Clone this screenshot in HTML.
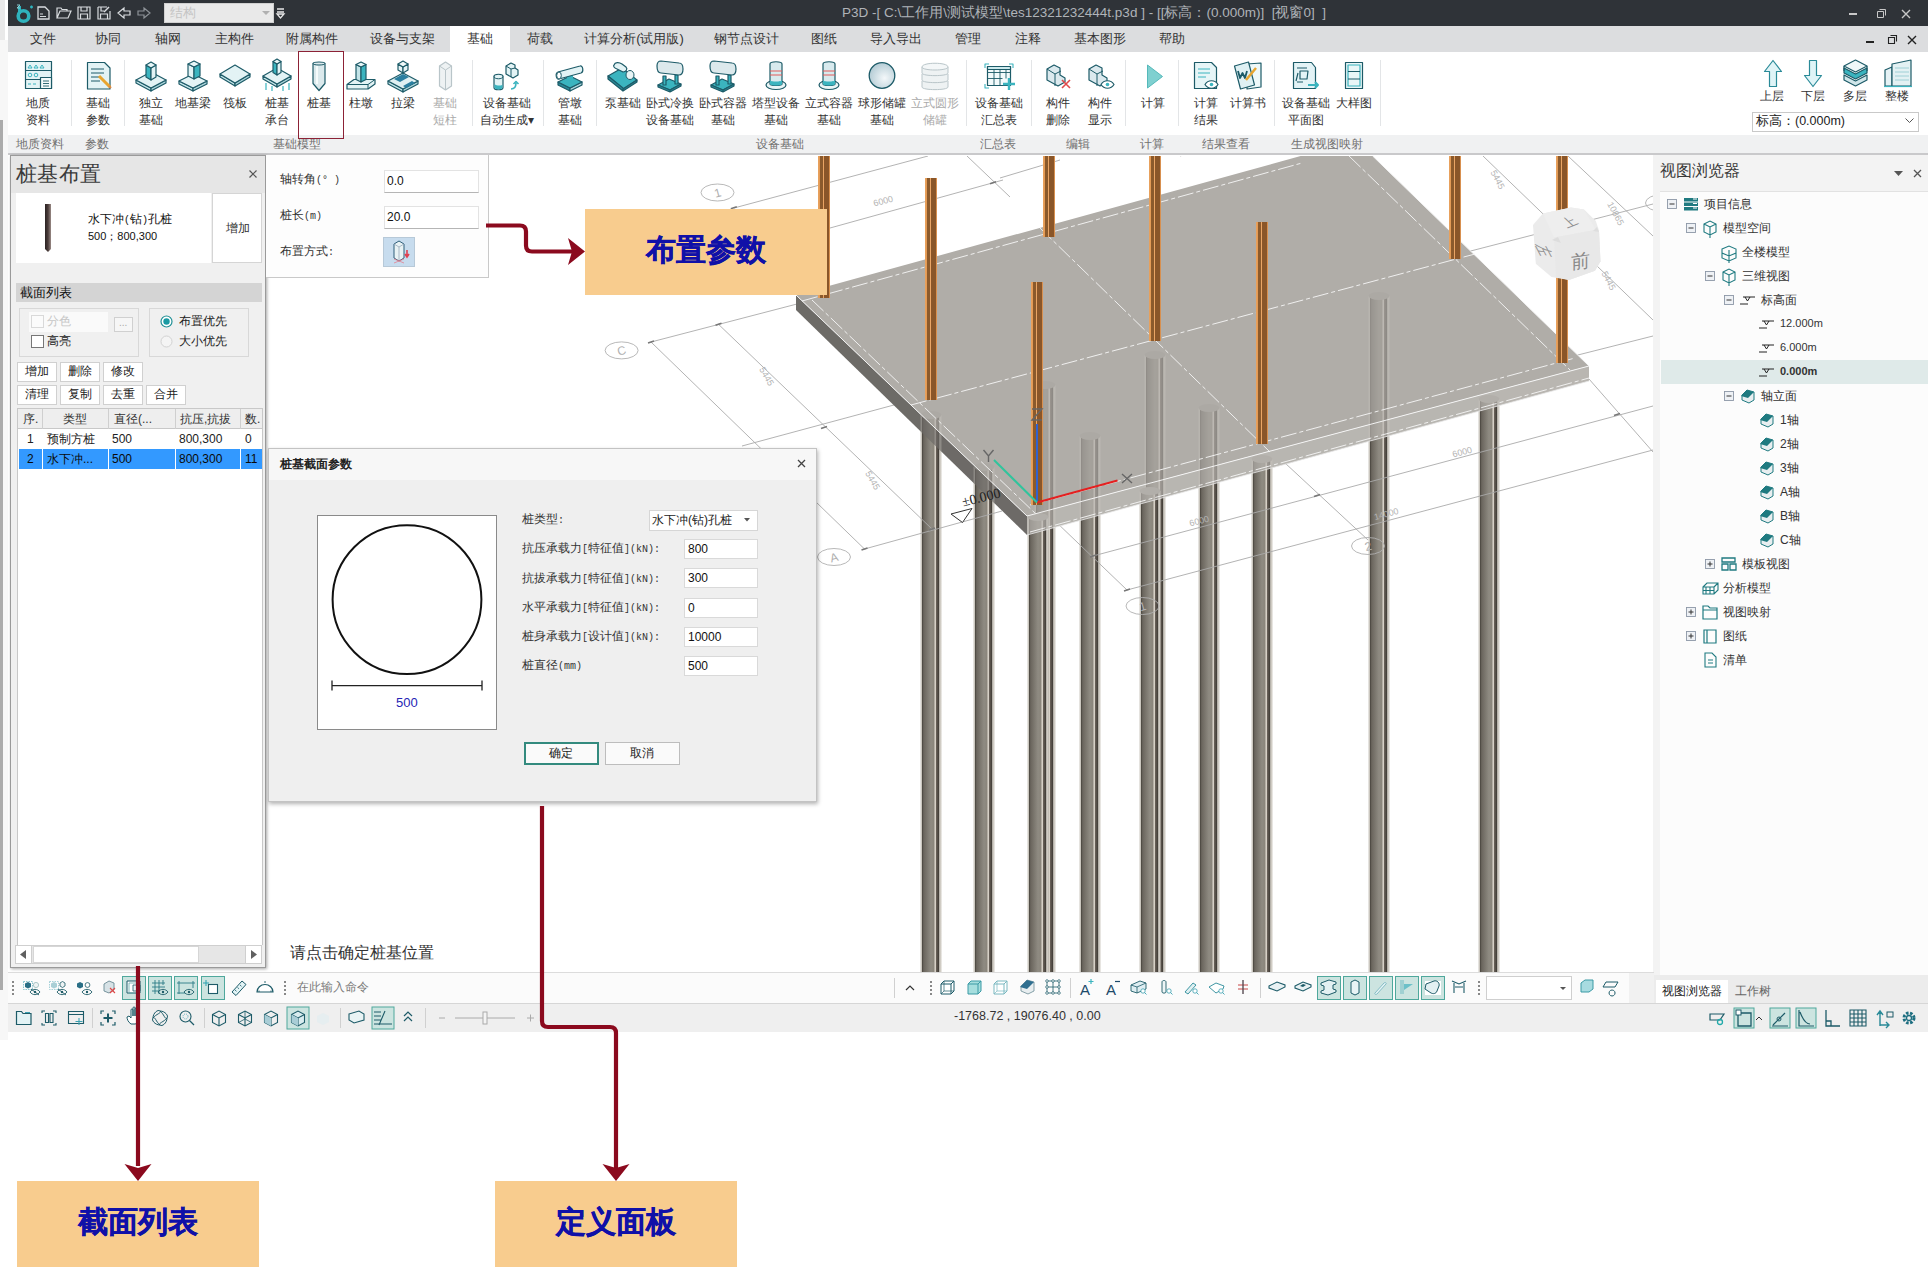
<!DOCTYPE html><html><head><meta charset="utf-8"><style>
*{box-sizing:border-box;margin:0;padding:0}
html,body{width:1928px;height:1267px;overflow:hidden;background:#fff;font-family:"Liberation Sans",sans-serif;color:#222}
body{position:relative}
.a{position:absolute}
.t{position:absolute;white-space:nowrap;line-height:1}
.tab{position:absolute;top:26px;height:25px;line-height:25px;font-size:13px;color:#333;white-space:nowrap;transform:translateX(-50%)}
.rl{position:absolute;font-size:12px;line-height:17px;color:#333;text-align:center;transform:translateX(-50%);white-space:nowrap}
.dis{color:#aaa}
.gl{position:absolute;top:135.5px;font-size:12px;line-height:17px;color:#707070;transform:translateX(-50%);white-space:nowrap}
.sep{position:absolute;top:60px;width:1px;height:66px;background:#e3e5e7}
svg{position:absolute;overflow:visible}
.m{font-family:"Liberation Mono",monospace;font-size:10px}
</style></head><body>
<div class="a" style="left:0px;top:0px;width:8px;height:1267px;background:#fff"></div>
<div class="a" style="left:0px;top:0px;width:5px;height:40px;background:#e9e9e9"></div>
<div class="a" style="left:0px;top:40px;width:8px;height:1000px;background:#f7f7f7"></div>
<div class="a" style="left:0px;top:120px;width:3px;height:870px;background:#ababab"></div>
<div class="a" style="left:8px;top:0px;width:1920px;height:26px;background:#2f3338"></div>
<svg style="left:14px;top:3px" width="20" height="20" viewBox="0 0 20 20" ><circle cx="9.5" cy="13" r="5.3" fill="none" stroke="#2fb3bd" stroke-width="3.6"/><rect x="4" y="3" width="3" height="8" fill="#2fb3bd"/><path d="M16 4h3M17.5 2.5v3" stroke="#2fb3bd" stroke-width="1.4"/><path d="M3 2h3l-3 3h3" stroke="#8ccdd2" stroke-width="1" fill="none"/></svg>
<svg style="left:37px;top:6px" width="13" height="14" viewBox="0 0 13 14" ><path d="M1 1h7l4 4v8H1z" fill="none" stroke="#d9dcdf" stroke-width="1.3"/><path d="M3 8h3M3 10.5h6" stroke="#d9dcdf" stroke-width="1.1"/></svg>
<svg style="left:56px;top:6px" width="16" height="13" viewBox="0 0 16 13" ><path d="M1 2h4l1 1.5h5V5H4L1 12z M1 12l3-7h11l-3 7z" fill="none" stroke="#d9dcdf" stroke-width="1.2"/></svg>
<svg style="left:77px;top:6px" width="14" height="14" viewBox="0 0 14 14" ><path d="M1 1h12v12H1z M4 1v4h6V1 M3.5 13V8h7v5" fill="none" stroke="#d9dcdf" stroke-width="1.2"/></svg>
<svg style="left:97px;top:6px" width="14" height="14" viewBox="0 0 14 14" ><path d="M1 1h9M13 5v8H1V1 M3.5 13V8h7v5 M4 1v4h3" fill="none" stroke="#d9dcdf" stroke-width="1.2"/><path d="M7 6l5-5" stroke="#d9dcdf" stroke-width="1.5"/></svg>
<svg style="left:117px;top:7px" width="14" height="12" viewBox="0 0 14 12" ><path d="M1 6l6-5v3h6v4H7v3z" fill="none" stroke="#d9dcdf" stroke-width="1.2"/></svg>
<svg style="left:137px;top:7px" width="14" height="12" viewBox="0 0 14 12" ><path d="M13 6L7 1v3H1v4h6v3z" fill="none" stroke="#8d9297" stroke-width="1.2"/></svg>
<div class="a" style="left:164px;top:3px;width:110px;height:20px;background:#e9e9e9;border:1px solid #d0d0d0"></div>
<div class="t" style="left:170px;top:6px;font-size:13px;color:#c4c4c4">结构</div>
<svg style="left:262px;top:11px" width="8" height="5" viewBox="0 0 8 5" ><path d="M0 0h8L4 4z" fill="#b0b0b0"/></svg>
<svg style="left:276px;top:8px" width="9" height="11" viewBox="0 0 9 11" ><path d="M1 1h7M1 4h7M1 6h7L4.5 10z" fill="none" stroke="#e8e8e8" stroke-width="1.3"/></svg>
<div class="t" style="left:842px;top:6px;font-size:13.5px;color:#b0b4b8">P3D -[ C:\工作用\测试模型\tes12321232444t.p3d ] - [[标高：(0.000m)]&nbsp; [视窗0]&nbsp; ]</div>
<svg style="left:1849px;top:13px" width="9" height="3" viewBox="0 0 9 3" ><rect x="0" y="0" width="8" height="2" fill="#c8c8c8"/></svg>
<svg style="left:1877px;top:9px" width="9" height="9" viewBox="0 0 9 9" ><path d="M2.5 0.5h6v6M0.5 2.5h6v6h-6z" fill="none" stroke="#c8c8c8" stroke-width="1"/></svg>
<svg style="left:1901px;top:9px" width="10" height="10" viewBox="0 0 10 10" ><path d="M1 1l8 8M9 1l-8 8" stroke="#c8c8c8" stroke-width="1.4"/></svg>
<div class="a" style="left:8px;top:26px;width:1920px;height:26px;background:#dcdddf"></div>
<div class="a" style="left:450px;top:26px;width:60px;height:26px;background:#fff"></div>
<div class="tab" style="left:43px">文件</div>
<div class="tab" style="left:108px">协同</div>
<div class="tab" style="left:168px">轴网</div>
<div class="tab" style="left:234px">主构件</div>
<div class="tab" style="left:312px">附属构件</div>
<div class="tab" style="left:402px">设备与支架</div>
<div class="tab" style="left:480px">基础</div>
<div class="tab" style="left:540px">荷载</div>
<div class="tab" style="left:634px">计算分析(试用版)</div>
<div class="tab" style="left:746px">钢节点设计</div>
<div class="tab" style="left:824px">图纸</div>
<div class="tab" style="left:896px">导入导出</div>
<div class="tab" style="left:968px">管理</div>
<div class="tab" style="left:1028px">注释</div>
<div class="tab" style="left:1100px">基本图形</div>
<div class="tab" style="left:1172px">帮助</div>
<svg style="left:1866px;top:41px" width="9" height="3" viewBox="0 0 9 3" ><rect x="0" y="0" width="8" height="2" fill="#222"/></svg>
<svg style="left:1888px;top:35px" width="9" height="9" viewBox="0 0 9 9" ><path d="M2.5 0.5h6v6M0.5 2.5h6v6h-6z" fill="none" stroke="#222" stroke-width="1.1"/></svg>
<svg style="left:1907px;top:35px" width="10" height="10" viewBox="0 0 10 10" ><path d="M1 1l8 8M9 1l-8 8" stroke="#222" stroke-width="1.4"/></svg>
<div class="a" style="left:8px;top:52px;width:1920px;height:83px;background:#fff"></div>
<div class="a" style="left:8px;top:135px;width:1920px;height:18px;background:#f0f1f2"></div>
<div class="a" style="left:8px;top:153px;width:1920px;height:2px;background:#c9c9cb"></div>
<div class="rl" style="left:38px;top:95px">地质</div>
<div class="rl" style="left:38px;top:112px">资料</div>
<div class="rl" style="left:98px;top:95px">基础</div>
<div class="rl" style="left:98px;top:112px">参数</div>
<div class="rl" style="left:151px;top:95px">独立</div>
<div class="rl" style="left:151px;top:112px">基础</div>
<div class="rl" style="left:193px;top:95px">地基梁</div>
<div class="rl" style="left:235px;top:95px">筏板</div>
<div class="rl" style="left:277px;top:95px">桩基</div>
<div class="rl" style="left:277px;top:112px">承台</div>
<div class="rl" style="left:319px;top:95px">桩基</div>
<div class="rl" style="left:361px;top:95px">柱墩</div>
<div class="rl" style="left:403px;top:95px">拉梁</div>
<div class="rl dis" style="left:445px;top:95px">基础</div>
<div class="rl dis" style="left:445px;top:112px">短柱</div>
<div class="rl" style="left:507px;top:95px">设备基础</div>
<div class="rl" style="left:507px;top:112px">自动生成▾</div>
<div class="rl" style="left:570px;top:95px">管墩</div>
<div class="rl" style="left:570px;top:112px">基础</div>
<div class="rl" style="left:623px;top:95px">泵基础</div>
<div class="rl" style="left:670px;top:95px">卧式冷换</div>
<div class="rl" style="left:670px;top:112px">设备基础</div>
<div class="rl" style="left:723px;top:95px">卧式容器</div>
<div class="rl" style="left:723px;top:112px">基础</div>
<div class="rl" style="left:776px;top:95px">塔型设备</div>
<div class="rl" style="left:776px;top:112px">基础</div>
<div class="rl" style="left:829px;top:95px">立式容器</div>
<div class="rl" style="left:829px;top:112px">基础</div>
<div class="rl" style="left:882px;top:95px">球形储罐</div>
<div class="rl" style="left:882px;top:112px">基础</div>
<div class="rl dis" style="left:935px;top:95px">立式圆形</div>
<div class="rl dis" style="left:935px;top:112px">储罐</div>
<div class="rl" style="left:999px;top:95px">设备基础</div>
<div class="rl" style="left:999px;top:112px">汇总表</div>
<div class="rl" style="left:1058px;top:95px">构件</div>
<div class="rl" style="left:1058px;top:112px">删除</div>
<div class="rl" style="left:1100px;top:95px">构件</div>
<div class="rl" style="left:1100px;top:112px">显示</div>
<div class="rl" style="left:1153px;top:95px">计算</div>
<div class="rl" style="left:1206px;top:95px">计算</div>
<div class="rl" style="left:1206px;top:112px">结果</div>
<div class="rl" style="left:1248px;top:95px">计算书</div>
<div class="rl" style="left:1306px;top:95px">设备基础</div>
<div class="rl" style="left:1306px;top:112px">平面图</div>
<div class="rl" style="left:1354px;top:95px">大样图</div>
<div class="sep" style="left:71px"></div>
<div class="sep" style="left:124px"></div>
<div class="sep" style="left:472px"></div>
<div class="sep" style="left:543px"></div>
<div class="sep" style="left:596px"></div>
<div class="sep" style="left:966px"></div>
<div class="sep" style="left:1031px"></div>
<div class="sep" style="left:1125px"></div>
<div class="sep" style="left:1178px"></div>
<div class="sep" style="left:1274px"></div>
<div class="sep" style="left:1380px"></div>
<div class="gl" style="left:40px">地质资料</div>
<div class="gl" style="left:97px">参数</div>
<div class="gl" style="left:297px">基础模型</div>
<div class="gl" style="left:780px">设备基础</div>
<div class="gl" style="left:998px">汇总表</div>
<div class="gl" style="left:1078px">编辑</div>
<div class="gl" style="left:1152px">计算</div>
<div class="gl" style="left:1226px">结果查看</div>
<div class="gl" style="left:1327px">生成视图映射</div>
<div class="a" style="left:298px;top:51px;width:46px;height:88px;border:1px solid #8c2236"></div>
<div class="rl" style="left:1772px;top:88px">上层</div>
<div class="rl" style="left:1813px;top:88px">下层</div>
<div class="rl" style="left:1855px;top:88px">多层</div>
<div class="rl" style="left:1897px;top:88px">整楼</div>
<div class="a" style="left:1752px;top:112px;width:167px;height:20px;background:#fff;border:1px solid #c9c9c9"></div>
<div class="t" style="left:1756px;top:115px;font-size:12.5px;color:#222">标高：(0.000m)</div>
<svg style="left:1905px;top:118px" width="9" height="6" viewBox="0 0 9 6" ><path d="M0.5 0.5l4 4 4-4" fill="none" stroke="#555" stroke-width="1"/></svg>
<svg style="left:0;top:0" width="1928" height="160" viewBox="0 0 1928 160"><path d="M25.5 61.5h26v27h-26z" fill="#e3f3f5" stroke="#1d5b68" stroke-width="1.2" stroke-linejoin="round" /><path d="M25.5 70.5h26M25.5 79.5h15" fill="#1d5b68" stroke="#1d5b68" stroke-width="1.2" stroke-linejoin="round" /><path d="M28 68l2-3 2 3zM34 68l2-3 2 3zM40 68l2-3 2 3z" fill="none" stroke="#3bb4bf" stroke-width="1" stroke-linejoin="round" /><circle cx="30" cy="75" r="1.8" fill="none" stroke="#3bb4bf" stroke-width="1"/><circle cx="36" cy="75" r="1.8" fill="none" stroke="#3bb4bf" stroke-width="1"/><path d="M28 84h3M33 84h3" fill="none" stroke="#3bb4bf" stroke-width="1" stroke-linejoin="round" /><path d="M40.5 77.5h11v11h-11z" fill="#f4fbfb" stroke="#1d5b68" stroke-width="1.2" stroke-linejoin="round" /><path d="M43 81h6M43 83.5h6M43 86h6" fill="none" stroke="#1d5b68" stroke-width="0.9" stroke-linejoin="round" /><path d="M87.5 62.5h17l5.5 5.5v21h-22.5z" fill="#e3f3f5" stroke="#1d5b68" stroke-width="1.2" stroke-linejoin="round" /><path d="M91 69h13M91 73h13M91 77h10M91 81h9" fill="none" stroke="#1d5b68" stroke-width="1" stroke-linejoin="round" /><path d="M99 76l11 11" fill="none" stroke="#e8a530" stroke-width="3" stroke-linejoin="round" /><path d="M109 86l2 2" fill="none" stroke="#d84" stroke-width="2" stroke-linejoin="round" /><path d="M136 80L151 88L151 91L136 83Z" fill="#c3e4e8" stroke="#1d5b68" stroke-width="1.2" stroke-linejoin="round" /><path d="M151 88L166 80L166 83L151 91Z" fill="#a9d3d9" stroke="#1d5b68" stroke-width="1.2" stroke-linejoin="round" /><path d="M136 80L151 72L166 80L151 88Z" fill="#e3f3f5" stroke="#1d5b68" stroke-width="1.2" stroke-linejoin="round" /><path d="M146 65L151 68L151 80L146 77Z" fill="#3bb4bf" stroke="#1d5b68" stroke-width="1.2" stroke-linejoin="round" /><path d="M151 68L156 65L156 77L151 80Z" fill="#e3f3f5" stroke="#1d5b68" stroke-width="1.2" stroke-linejoin="round" /><path d="M146 65L151 62L156 65L151 68Z" fill="#e9f7f8" stroke="#1d5b68" stroke-width="1.2" stroke-linejoin="round" /><path d="M179 81L193 88L193 91L179 84Z" fill="#c3e4e8" stroke="#1d5b68" stroke-width="1.2" stroke-linejoin="round" /><path d="M193 88L207 81L207 84L193 91Z" fill="#a9d3d9" stroke="#1d5b68" stroke-width="1.2" stroke-linejoin="round" /><path d="M179 81L193 74L207 81L193 88Z" fill="#e3f3f5" stroke="#1d5b68" stroke-width="1.2" stroke-linejoin="round" /><path d="M188 64L194 67L194 79L188 76Z" fill="#e3f3f5" stroke="#1d5b68" stroke-width="1.2" stroke-linejoin="round" /><path d="M194 67L200 64L200 76L194 79Z" fill="#3bb4bf" stroke="#1d5b68" stroke-width="1.2" stroke-linejoin="round" /><path d="M188 64L194 61L200 64L194 67Z" fill="#e9f7f8" stroke="#1d5b68" stroke-width="1.2" stroke-linejoin="round" /><path d="M220 74L235 83L235 86L220 77Z" fill="#c3e4e8" stroke="#1d5b68" stroke-width="1.2" stroke-linejoin="round" /><path d="M235 83L250 74L250 77L235 86Z" fill="#a9d3d9" stroke="#1d5b68" stroke-width="1.2" stroke-linejoin="round" /><path d="M220 74L235 65L250 74L235 83Z" fill="#e3f3f5" stroke="#1d5b68" stroke-width="1.2" stroke-linejoin="round" /><path d="M266 83v7M272 86v5M283 86v5M289 83v7" fill="none" stroke="#3bb4bf" stroke-width="1.2" stroke-linejoin="round" /><path d="M263 76L277 84L277 87L263 79Z" fill="#c3e4e8" stroke="#1d5b68" stroke-width="1.2" stroke-linejoin="round" /><path d="M277 84L291 76L291 79L277 87Z" fill="#a9d3d9" stroke="#1d5b68" stroke-width="1.2" stroke-linejoin="round" /><path d="M263 76L277 68L291 76L277 84Z" fill="#e3f3f5" stroke="#1d5b68" stroke-width="1.2" stroke-linejoin="round" /><path d="M273 61.5L277 64L277 75L273 72.5Z" fill="#3bb4bf" stroke="#1d5b68" stroke-width="1.2" stroke-linejoin="round" /><path d="M277 64L281 61.5L281 72.5L277 75Z" fill="#e3f3f5" stroke="#1d5b68" stroke-width="1.2" stroke-linejoin="round" /><path d="M273 61.5L277 59.0L281 61.5L277 64Z" fill="#e9f7f8" stroke="#1d5b68" stroke-width="1.2" stroke-linejoin="round" /><path d="M313 63.5c0-2 12-2 12 0v20l-6 7l-6-7z" fill="#dbe9ec" stroke="#1d5b68" stroke-width="1.2" stroke-linejoin="round" /><path d="M313 63.5c0 2 12 2 12 0" fill="none" stroke="#1d5b68" stroke-width="1" stroke-linejoin="round" /><path d="M317 66v18" fill="none" stroke="#f5fbfb" stroke-width="2" stroke-linejoin="round" /><path d="M347 84.5l7-5h21v4.5l-7 5h-21z" fill="#e3f3f5" stroke="#1d5b68" stroke-width="1.2" stroke-linejoin="round" /><path d="M347 84.5h21l7-5M368 84.5v4.5" fill="none" stroke="#1d5b68" stroke-width="1" stroke-linejoin="round" /><path d="M356 64.5L361 67L361 82L356 79.5Z" fill="#c3e4e8" stroke="#1d5b68" stroke-width="1.2" stroke-linejoin="round" /><path d="M361 67L366 64.5L366 79.5L361 82Z" fill="#3bb4bf" stroke="#1d5b68" stroke-width="1.2" stroke-linejoin="round" /><path d="M356 64.5L361 62.0L366 64.5L361 67Z" fill="#e9f7f8" stroke="#1d5b68" stroke-width="1.2" stroke-linejoin="round" /><path d="M388 81L403 89L403 92L388 84Z" fill="#c3e4e8" stroke="#1d5b68" stroke-width="1.2" stroke-linejoin="round" /><path d="M403 89L418 81L418 84L403 92Z" fill="#a9d3d9" stroke="#1d5b68" stroke-width="1.2" stroke-linejoin="round" /><path d="M388 81L403 73L418 81L403 89Z" fill="#dff0f2" stroke="#1d5b68" stroke-width="1.2" stroke-linejoin="round" /><path d="M394 79l9-5 6 3-9 5zM403 86l9-5 3 2-9 5z" fill="#2a7fa0" stroke="none" stroke-width="1.2" stroke-linejoin="round" /><path d="M398 64L403 67L403 73L398 70Z" fill="#e3f3f5" stroke="#1d5b68" stroke-width="1.2" stroke-linejoin="round" /><path d="M403 67L408 64L408 70L403 73Z" fill="#e3f3f5" stroke="#1d5b68" stroke-width="1.2" stroke-linejoin="round" /><path d="M398 64L403 61L408 64L403 67Z" fill="#f2fafa" stroke="#1d5b68" stroke-width="1.2" stroke-linejoin="round" /><path d="M439.5 66l6-4 6 4v20l-6 4-6-4z" fill="#eef2f3" stroke="#b9c5c9" stroke-width="1.2" stroke-linejoin="round" /><path d="M445.5 70v20M439.5 66l6 4 6-4" fill="none" stroke="#b9c5c9" stroke-width="1" stroke-linejoin="round" /><path d="M494 76.5c0-3 9-3 9 0v11c0 3-9 3-9 0z" fill="#e3f3f5" stroke="#1d5b68" stroke-width="1.2" stroke-linejoin="round" /><path d="M494 76.5c0 3 9 3 9 0" fill="none" stroke="#1d5b68" stroke-width="1" stroke-linejoin="round" /><path d="M494.5 84c2 2 8 2 8 0v3.5c0 2.5-8 2.5-8 0z" fill="#3bb4bf" stroke="none" stroke-width="1.2" stroke-linejoin="round" /><path d="M506 66l5-3 4 2v3l3 2v5l-5 3-7-4z" fill="#e3f3f5" stroke="#1d5b68" stroke-width="1.2" stroke-linejoin="round" /><path d="M506 66l5 3v8M511 69l4-1" fill="none" stroke="#1d5b68" stroke-width="1" stroke-linejoin="round" /><path d="M511 89c3 0 5-2 5-6M513.5 84l2.5-2.5 2.5 2.5" fill="none" stroke="#3bb4bf" stroke-width="1.6" stroke-linejoin="round" /><path d="M558 82L570 88L570 91L558 85Z" fill="#2a8a98" stroke="#1d5b68" stroke-width="1.2" stroke-linejoin="round" /><path d="M570 88L582 82L582 85L570 91Z" fill="#a9d3d9" stroke="#1d5b68" stroke-width="1.2" stroke-linejoin="round" /><path d="M558 82L570 76L582 82L570 88Z" fill="#3bb4bf" stroke="#1d5b68" stroke-width="1.2" stroke-linejoin="round" /><path d="M567 73v8h6v-8z" fill="#3bb4bf" stroke="none" stroke-width="1.2" stroke-linejoin="round" /><path d="M558 72l22-6c3-1 4 6 1 7l-22 6c-3 1-4-6-1-7z" fill="#e3f3f5" stroke="#1d5b68" stroke-width="1.2" stroke-linejoin="round" /><ellipse cx="559" cy="75.5" rx="2.3" ry="3.5" fill="#fff" stroke="#1d5b68" stroke-width="1"/><path d="M608 76l15 13 14-9-15-12z" fill="#3bb4bf" stroke="#1d5b68" stroke-width="1.2" stroke-linejoin="round" /><path d="M608 76v3l15 12v-3zM623 91l14-9v-2l-14 9z" fill="#2a8a98" stroke="#1d5b68" stroke-width="1.2" stroke-linejoin="round" /><path d="M614 65c1-3 5-3 8-1l4 3c2 2 0 5-3 5l-6-3c-3-1-4-3-3-4z" fill="#e3f3f5" stroke="#1d5b68" stroke-width="1.2" stroke-linejoin="round" /><ellipse cx="630" cy="75" rx="4" ry="4.5" fill="#e8f4f5" stroke="#1d5b68" stroke-width="1"/><path d="M658 85l12 5 11-6-12-5z" fill="#3bb4bf" stroke="#1d5b68" stroke-width="1.2" stroke-linejoin="round" /><path d="M658 85v2l12 5v-2zM670 92l11-6v-2l-11 6z" fill="#2a8a98" stroke="#1d5b68" stroke-width="1.2" stroke-linejoin="round" /><path d="M663 76v9h3v-9zM675 75v9h3v-9z" fill="#3bb4bf" stroke="#1d5b68" stroke-width="1.2" stroke-linejoin="round" /><path d="M657 66c0-4 2-5 4-5l18 2c3 0 4 3 4 6s-1 6-4 6l-18-2c-3 0-4-3-4-7z" fill="#dce9ec" stroke="#1d5b68" stroke-width="1.2" stroke-linejoin="round" /><path d="M711 85l12 5 11-6-12-5z" fill="#3bb4bf" stroke="#1d5b68" stroke-width="1.2" stroke-linejoin="round" /><path d="M711 85v2l12 5v-2zM723 92l11-6v-2l-11 6z" fill="#2a8a98" stroke="#1d5b68" stroke-width="1.2" stroke-linejoin="round" /><path d="M716 76v9h3v-9zM728 75v9h3v-9z" fill="#3bb4bf" stroke="#1d5b68" stroke-width="1.2" stroke-linejoin="round" /><path d="M710 66c0-4 2-5 4-5l18 2c3 0 4 3 4 6s-1 6-4 6l-18-2c-3 0-4-3-4-7z" fill="#dce9ec" stroke="#1d5b68" stroke-width="1.2" stroke-linejoin="round" /><ellipse cx="776" cy="85" rx="10" ry="4.5" fill="#e9f5f6" stroke="#1d5b68" stroke-width="1.2"/><path d="M770 64c0-3 12-3 12 0v20c0 2-12 2-12 0z" fill="#d8eaee" stroke="#1d5b68" stroke-width="1.2" stroke-linejoin="round" /><path d="M770 80c0 2 12 2 12 0v4c0 2-12 2-12 0z" fill="#3bb4bf" stroke="none" stroke-width="1.2" stroke-linejoin="round" /><path d="M770 71h12M770 75h12" fill="none" stroke="#e25b5b" stroke-width="1.2" stroke-linejoin="round" /><ellipse cx="829" cy="85" rx="10" ry="4.5" fill="#e9f5f6" stroke="#1d5b68" stroke-width="1.2"/><path d="M823 64c0-3 12-3 12 0v20c0 2-12 2-12 0z" fill="#d8eaee" stroke="#1d5b68" stroke-width="1.2" stroke-linejoin="round" /><path d="M823 80c0 2 12 2 12 0v4c0 2-12 2-12 0z" fill="#3bb4bf" stroke="none" stroke-width="1.2" stroke-linejoin="round" /><path d="M823 71h12M823 75h12" fill="none" stroke="#e25b5b" stroke-width="1.2" stroke-linejoin="round" /><defs><radialGradient id="sph" cx="0.6" cy="0.6" r="0.6"><stop offset="0" stop-color="#f4f8fa"/><stop offset="1" stop-color="#b6cdd6"/></radialGradient></defs><circle cx="882" cy="75.5" r="12.8" fill="url(#sph)" stroke="#1d5b68" stroke-width="1.3"/><path d="M922 81v6c0 3.5 26 3.5 26 0v-6" fill="#eef2f3" stroke="#b9c5c9" stroke-width="1" stroke-linejoin="round" /><path d="M922 74v6c0 3.5 26 3.5 26 0v-6" fill="#eef2f3" stroke="#b9c5c9" stroke-width="1" stroke-linejoin="round" /><path d="M922 67v6c0 3.5 26 3.5 26 0v-6" fill="#eef2f3" stroke="#b9c5c9" stroke-width="1" stroke-linejoin="round" /><path d="M922 67c0-5 26-5 26 0c0 4-26 4-26 0z" fill="#f4f7f8" stroke="#b9c5c9" stroke-width="1" stroke-linejoin="round" /><path d="M987.5 66.5h23v19h-23z" fill="#f3fafb" stroke="#1d5b68" stroke-width="1.2" stroke-linejoin="round" /><path d="M987.5 66.5h23v3h-23z" fill="#cdeaed" stroke="#1d5b68" stroke-width="1.2" stroke-linejoin="round" /><path d="M987.5 72.5h23M987.5 78.5h15M994 69.5v16M1000 69.5v16M1006 69.5v9" fill="none" stroke="#1d5b68" stroke-width="0.9" stroke-linejoin="round" /><path d="M985 68v-4h4M1009 64h4v4M985 84v4h4" fill="none" stroke="#3bb4bf" stroke-width="1.1" stroke-linejoin="round" /><path d="M1003 84h12M1009 78v12" fill="none" stroke="#3bb4bf" stroke-width="2.4" stroke-linejoin="round" /><path d="M1047 69l7-4 6 3v7l5 3v4l-7 4-11-6z" fill="#dbe9ee" stroke="#1d5b68" stroke-width="1.2" stroke-linejoin="round" /><path d="M1047 69l8 5v12M1055 74l6-3" fill="none" stroke="#1d5b68" stroke-width="1" stroke-linejoin="round" /><path d="M1062 80l8 8M1070 80l-8 8" fill="none" stroke="#e04a4a" stroke-width="1.6" stroke-linejoin="round" /><path d="M1089 69l7-4 6 3v7l5 3v4l-7 4-11-6z" fill="#dbe9ee" stroke="#1d5b68" stroke-width="1.2" stroke-linejoin="round" /><path d="M1089 69l8 5v12M1097 74l6-3" fill="none" stroke="#1d5b68" stroke-width="1" stroke-linejoin="round" /><path d="M1101 84.5c3-5 10-5 13 0c-3 5-10 5-13 0z" fill="#fff" stroke="#1d5b68" stroke-width="1.2" stroke-linejoin="round" /><circle cx="1107.5" cy="84.5" r="1.8" fill="#3bb4bf"/><path d="M1147.5 65l15 11.5-15 11.5z" fill="#7fd0d0" stroke="#55b9ba" stroke-width="1" stroke-linejoin="round" /><path d="M1194.5 62.5h17l5 5v21h-22z" fill="#e6f5f7" stroke="#1d5b68" stroke-width="1.2" stroke-linejoin="round" /><path d="M1198 69h12M1198 73h12M1198 77h8" fill="none" stroke="#3bb4bf" stroke-width="1" stroke-linejoin="round" /><path d="M1205 84.5c3-5 10-5 13 0c-3 5-10 5-13 0z" fill="#fff" stroke="#1d5b68" stroke-width="1.2" stroke-linejoin="round" /><circle cx="1211.5" cy="84.5" r="1.8" fill="#3bb4bf"/><path d="M1247 64l14-1v24l-14 2z" fill="#eef8f9" stroke="#1d5b68" stroke-width="1.2" stroke-linejoin="round" /><path d="M1234.5 66l14-4 6 23-14 4z" fill="#dff0f3" stroke="#1d5b68" stroke-width="1.2" stroke-linejoin="round" /><path d="M1238 71l2 7 2.5-5 2.5 5 2-7" fill="none" stroke="#1d5b68" stroke-width="1.8" stroke-linejoin="round" /><path d="M1246 80l10-12" fill="none" stroke="#e8a530" stroke-width="2.5" stroke-linejoin="round" /><path d="M1293.5 62.5h18l4 5v21h-22z" fill="#e3f3f6" stroke="#1d5b68" stroke-width="1.2" stroke-linejoin="round" /><path d="M1297 68h10M1298 73l-2 8M1300 71h8l-1 8h-7z" fill="none" stroke="#1d5b68" stroke-width="1.2" stroke-linejoin="round" /><path d="M1297 82h6" fill="none" stroke="#1d5b68" stroke-width="1" stroke-linejoin="round" /><path d="M1308 85h10M1315 82l3 3-3 3" fill="none" stroke="#3bb4bf" stroke-width="2" stroke-linejoin="round" /><path d="M1345.5 62.5h17v26h-17z" fill="#e9f6f7" stroke="#1d5b68" stroke-width="1.2" stroke-linejoin="round" /><path d="M1348 65h12v21h-12z" fill="none" stroke="#3bb4bf" stroke-width="1.2" stroke-linejoin="round" /><path d="M1348 71.5h12M1348 79h12" fill="none" stroke="#1d5b68" stroke-width="1" stroke-linejoin="round" /><path d="M1773 60.5l-8.5 11h5v15h7v-15h5z" fill="#dff4f7" stroke="#2a8a98" stroke-width="1.2" stroke-linejoin="round" /><path d="M1813 86.5l-8.5-11h5v-15h7v15h5z" fill="#dff4f7" stroke="#2a8a98" stroke-width="1.2" stroke-linejoin="round" /><path d="M1844 80l11.5 6 11.5-6v-5l-11.5 6-11.5-6z" fill="#d0e6ea" stroke="#1d5b68" stroke-width="1.2" stroke-linejoin="round" /><path d="M1844 73l11.5 6 11.5-6v-5l-11.5 6-11.5-6z" fill="#3bb4bf" stroke="#1d5b68" stroke-width="1.2" stroke-linejoin="round" /><path d="M1844 66l11.5-6 11.5 6-11.5 6z" fill="#f0f8f9" stroke="#1d5b68" stroke-width="1.2" stroke-linejoin="round" /><path d="M1844 66v5M1867 66v5" fill="none" stroke="#1d5b68" stroke-width="1.2" stroke-linejoin="round" /><path d="M1885 70l7-3v19h-7z" fill="#e5f2f5" stroke="#1d5b68" stroke-width="1.2" stroke-linejoin="round" /><path d="M1892 64l19-4v26h-19z" fill="#e3f1f3" stroke="#1d5b68" stroke-width="1.2" stroke-linejoin="round" /><path d="M1895 68h14M1895 72h14M1895 76h14M1895 80h14" fill="none" stroke="#9fd0d6" stroke-width="1" stroke-linejoin="round" /><path d="M1884 86.5h28" fill="none" stroke="#3bb4bf" stroke-width="1.2" stroke-linejoin="round" /></svg>
<svg style="left:0;top:0" width="1928" height="1000" viewBox="0 0 1928 1000"><defs><linearGradient id="pile" x1="0" x2="1"><stop offset="0" stop-color="#cbc7bf"/><stop offset="0.06" stop-color="#cbc7bf"/><stop offset="0.08" stop-color="#4a463f"/><stop offset="0.15" stop-color="#6a655d"/><stop offset="0.5" stop-color="#8f8b82"/><stop offset="0.65" stop-color="#8a857b"/><stop offset="0.68" stop-color="#d6d0c6"/><stop offset="0.72" stop-color="#d6d0c6"/><stop offset="0.75" stop-color="#6a625a"/><stop offset="0.88" stop-color="#3f3b35"/><stop offset="0.91" stop-color="#d0ccc4"/><stop offset="1" stop-color="#d0ccc4"/></linearGradient><linearGradient id="colg" x1="0" x2="1"><stop offset="0" stop-color="#e9a35f"/><stop offset="0.14" stop-color="#e39a55"/><stop offset="0.17" stop-color="#8b5a2c"/><stop offset="0.38" stop-color="#8b5a2c"/><stop offset="0.4" stop-color="#eaa565"/><stop offset="0.47" stop-color="#eaa565"/><stop offset="0.5" stop-color="#8a5629"/><stop offset="0.9" stop-color="#8a5629"/><stop offset="0.93" stop-color="#d8904f"/><stop offset="1" stop-color="#d8904f"/></linearGradient><clipPath id="vpc"><rect x="266" y="156" width="1387" height="816"/></clipPath></defs><g clip-path="url(#vpc)"><rect x="1368.5" y="296" width="21" height="676" fill="url(#pile)"/><ellipse cx="1379" cy="296" rx="10.5" ry="4" fill="#a6a29c"/><rect x="1144.5" y="355" width="21" height="617" fill="url(#pile)"/><ellipse cx="1155" cy="355" rx="10.5" ry="4" fill="#a6a29c"/><rect x="1034.5" y="385" width="21" height="587" fill="url(#pile)"/><ellipse cx="1045" cy="385" rx="10.5" ry="4" fill="#a6a29c"/><rect x="1478.5" y="399" width="21" height="573" fill="url(#pile)"/><ellipse cx="1489" cy="399" rx="10.5" ry="4" fill="#a6a29c"/><rect x="1198.5" y="408" width="21" height="564" fill="url(#pile)"/><ellipse cx="1209" cy="408" rx="10.5" ry="4" fill="#a6a29c"/><rect x="920.5" y="415" width="21" height="557" fill="url(#pile)"/><ellipse cx="931" cy="415" rx="10.5" ry="4" fill="#a6a29c"/><rect x="1079.5" y="436" width="21" height="536" fill="url(#pile)"/><ellipse cx="1090" cy="436" rx="10.5" ry="4" fill="#a6a29c"/><rect x="1251.5" y="459" width="21" height="513" fill="url(#pile)"/><ellipse cx="1262" cy="459" rx="10.5" ry="4" fill="#a6a29c"/><rect x="973.5" y="467" width="21" height="505" fill="url(#pile)"/><ellipse cx="984" cy="467" rx="10.5" ry="4" fill="#a6a29c"/><rect x="1139.5" y="491" width="21" height="481" fill="url(#pile)"/><ellipse cx="1150" cy="491" rx="10.5" ry="4" fill="#a6a29c"/><rect x="1027.5" y="517" width="21" height="455" fill="url(#pile)"/><ellipse cx="1038" cy="517" rx="10.5" ry="4" fill="#a6a29c"/><line x1="734" y1="208" x2="928" y2="156" stroke="#aaaaaa" stroke-width="0.9" /><line x1="740" y1="253" x2="1003" y2="180" stroke="#aaaaaa" stroke-width="0.9" /><line x1="967" y1="156" x2="1010" y2="197" stroke="#aaaaaa" stroke-width="0.9" /><line x1="651" y1="342" x2="797" y2="304" stroke="#aaaaaa" stroke-width="0.9" /><line x1="651" y1="342" x2="864.5" y2="549" stroke="#aaaaaa" stroke-width="0.9" /><line x1="718.5" y1="324.3" x2="932" y2="529" stroke="#aaaaaa" stroke-width="0.9" /><line x1="742" y1="446" x2="905" y2="402" stroke="#aaaaaa" stroke-width="0.9" /><line x1="864.5" y1="549" x2="1002" y2="511" stroke="#aaaaaa" stroke-width="0.9" /><line x1="1054" y1="520" x2="1127" y2="590" stroke="#aaaaaa" stroke-width="0.9" /><line x1="1093" y1="556" x2="1653" y2="406" stroke="#aaaaaa" stroke-width="0.9" /><line x1="1127" y1="590" x2="1653" y2="450" stroke="#aaaaaa" stroke-width="0.9" /><line x1="1271" y1="450" x2="1368" y2="540" stroke="#aaaaaa" stroke-width="0.9" /><line x1="1589" y1="379" x2="1653" y2="452" stroke="#aaaaaa" stroke-width="0.9" /><line x1="1483" y1="156" x2="1653" y2="320" stroke="#aaaaaa" stroke-width="0.9" /><line x1="1568" y1="156" x2="1653" y2="236" stroke="#aaaaaa" stroke-width="0.9" /><line x1="1459" y1="254" x2="1653" y2="204" stroke="#aaaaaa" stroke-width="0.9" /><line x1="1566" y1="358" x2="1653" y2="336" stroke="#aaaaaa" stroke-width="0.9" /><line x1="1000" y1="178" x2="1060" y2="160" stroke="#aaaaaa" stroke-width="0.9" /><line x1="1180" y1="156" x2="1200" y2="150" stroke="#aaaaaa" stroke-width="0.9" /><path d="M648 343l6-2" stroke="#777" stroke-width="1.6"/><path d="M715.5 325.3l6-2" stroke="#777" stroke-width="1.6"/><path d="M821 428.5l6-2" stroke="#777" stroke-width="1.6"/><path d="M861.5 550l6-2" stroke="#777" stroke-width="1.6"/><path d="M929 530l6-2" stroke="#777" stroke-width="1.6"/><path d="M990 183.7l6-2" stroke="#777" stroke-width="1.6"/><path d="M730.8 208.7l6-2" stroke="#777" stroke-width="1.6"/><path d="M1090 557l6-2" stroke="#777" stroke-width="1.6"/><path d="M1124 591l6-2" stroke="#777" stroke-width="1.6"/><path d="M1314 496.4l6-2" stroke="#777" stroke-width="1.6"/><path d="M1614 415.5l6-2" stroke="#777" stroke-width="1.6"/><ellipse cx="717.5" cy="192.5" rx="16.5" ry="8.5" fill="none" stroke="#b0b0b0" stroke-width="0.9"/><text x="717.5" y="197.0" font-size="12" fill="#b0b0b0" text-anchor="middle" transform="rotate(-15 717.5 192.5)" font-family="Liberation Sans">1</text><ellipse cx="621.6" cy="350.4" rx="16.5" ry="8.5" fill="none" stroke="#b0b0b0" stroke-width="0.9"/><text x="621.6" y="354.9" font-size="12" fill="#b0b0b0" text-anchor="middle" transform="rotate(-15 621.6 350.4)" font-family="Liberation Sans">C</text><ellipse cx="834" cy="557" rx="16.5" ry="8.5" fill="none" stroke="#b0b0b0" stroke-width="0.9"/><text x="834" y="561.5" font-size="12" fill="#b0b0b0" text-anchor="middle" transform="rotate(-15 834 557)" font-family="Liberation Sans">A</text><ellipse cx="1142.5" cy="606" rx="16.5" ry="8.5" fill="none" stroke="#b0b0b0" stroke-width="0.9"/><text x="1142.5" y="610.5" font-size="12" fill="#b0b0b0" text-anchor="middle" transform="rotate(-15 1142.5 606)" font-family="Liberation Sans">1</text><ellipse cx="1368" cy="546" rx="16.5" ry="8.5" fill="none" stroke="#b0b0b0" stroke-width="0.9"/><text x="1368" y="550.5" font-size="12" fill="#b0b0b0" text-anchor="middle" transform="rotate(-15 1368 546)" font-family="Liberation Sans">2</text><ellipse cx="1662" cy="203" rx="16.5" ry="8.5" fill="none" stroke="#b0b0b0" stroke-width="0.9"/><text x="1662" y="207.5" font-size="12" fill="#b0b0b0" text-anchor="middle" transform="rotate(-15 1662 203)" font-family="Liberation Sans">1</text><text x="884" y="204" font-size="9" fill="#b4b4b4" text-anchor="middle" transform="rotate(-15 884 204)" font-family="Liberation Sans">6000</text><text x="764" y="378" font-size="9" fill="#b4b4b4" text-anchor="middle" transform="rotate(60 764 378)" font-family="Liberation Sans">5445</text><text x="870" y="482" font-size="9" fill="#b4b4b4" text-anchor="middle" transform="rotate(60 870 482)" font-family="Liberation Sans">5445</text><text x="1495" y="181" font-size="9" fill="#b4b4b4" text-anchor="middle" transform="rotate(62 1495 181)" font-family="Liberation Sans">5445</text><text x="1613" y="215" font-size="9" fill="#b4b4b4" text-anchor="middle" transform="rotate(62 1613 215)" font-family="Liberation Sans">10865</text><text x="1606" y="282" font-size="9" fill="#b4b4b4" text-anchor="middle" transform="rotate(62 1606 282)" font-family="Liberation Sans">5445</text><text x="1200" y="524" font-size="9" fill="#b4b4b4" text-anchor="middle" transform="rotate(-15 1200 524)" font-family="Liberation Sans">6000</text><text x="1387" y="517" font-size="9" fill="#b4b4b4" text-anchor="middle" transform="rotate(-15 1387 517)" font-family="Liberation Sans">14000</text><text x="1463" y="455" font-size="9" fill="#b4b4b4" text-anchor="middle" transform="rotate(-15 1463 455)" font-family="Liberation Sans">6000</text><path d="M796 295L1027 516L1027 535L796 310Z" fill="#6d6b67"/><path d="M1027 516L1589 366L1589 381L1027 535Z" fill="#b9b6b1"/><path d="M796 295L1300.6 156L1372.7 156L1589 366L1027 516Z" fill="#b0ada8"/><clipPath id="slabc"><path d="M796 295L1300.6 156L1372.7 156L1589 366L1027 516Z M796 295L1027 516L1027 535L796 310Z M1027 516L1589 366L1589 381L1027 535Z"/></clipPath><g clip-path="url(#slabc)" opacity="0.32"><rect x="1368.5" y="296" width="21" height="676" fill="url(#pile)"/><ellipse cx="1379" cy="296" rx="10.5" ry="4" fill="#a6a29c"/><rect x="1144.5" y="355" width="21" height="617" fill="url(#pile)"/><ellipse cx="1155" cy="355" rx="10.5" ry="4" fill="#a6a29c"/><rect x="1034.5" y="385" width="21" height="587" fill="url(#pile)"/><ellipse cx="1045" cy="385" rx="10.5" ry="4" fill="#a6a29c"/><rect x="1478.5" y="399" width="21" height="573" fill="url(#pile)"/><ellipse cx="1489" cy="399" rx="10.5" ry="4" fill="#a6a29c"/><rect x="1198.5" y="408" width="21" height="564" fill="url(#pile)"/><ellipse cx="1209" cy="408" rx="10.5" ry="4" fill="#a6a29c"/><rect x="920.5" y="415" width="21" height="557" fill="url(#pile)"/><ellipse cx="931" cy="415" rx="10.5" ry="4" fill="#a6a29c"/><rect x="1079.5" y="436" width="21" height="536" fill="url(#pile)"/><ellipse cx="1090" cy="436" rx="10.5" ry="4" fill="#a6a29c"/><rect x="1251.5" y="459" width="21" height="513" fill="url(#pile)"/><ellipse cx="1262" cy="459" rx="10.5" ry="4" fill="#a6a29c"/><rect x="973.5" y="467" width="21" height="505" fill="url(#pile)"/><ellipse cx="984" cy="467" rx="10.5" ry="4" fill="#a6a29c"/><rect x="1139.5" y="491" width="21" height="481" fill="url(#pile)"/><ellipse cx="1150" cy="491" rx="10.5" ry="4" fill="#a6a29c"/><rect x="1027.5" y="517" width="21" height="455" fill="url(#pile)"/><ellipse cx="1038" cy="517" rx="10.5" ry="4" fill="#a6a29c"/></g><path d="M796 295L1027 516L1589 366L1372.7 156" fill="none" stroke="#f4f4f4" stroke-width="1"/><path d="M1027 535L1589 381" fill="none" stroke="#e8e8e8" stroke-width="0.8"/><line x1="802" y1="301" x2="1302" y2="163" stroke="#f6f6f6" stroke-width="1" stroke-dasharray="16 3 4 3" stroke-opacity="0.9"/><line x1="812" y1="300" x2="1037" y2="515" stroke="#f6f6f6" stroke-width="1" stroke-dasharray="16 3 4 3" stroke-opacity="0.9"/><line x1="911" y1="405" x2="1475" y2="254" stroke="#f6f6f6" stroke-width="1" stroke-dasharray="16 3 4 3" stroke-opacity="0.9"/><line x1="1030" y1="505" x2="1575" y2="358" stroke="#f6f6f6" stroke-width="1" stroke-dasharray="16 3 4 3" stroke-opacity="0.9"/><line x1="1040" y1="228" x2="1270" y2="452" stroke="#f6f6f6" stroke-width="1" stroke-dasharray="16 3 4 3" stroke-opacity="0.9"/><line x1="1349" y1="156" x2="1570" y2="370" stroke="#f6f6f6" stroke-width="1" stroke-dasharray="16 3 4 3" stroke-opacity="0.9"/><line x1="1030" y1="532" x2="1589" y2="378" stroke="#f6f6f6" stroke-width="1" stroke-dasharray="16 3 4 3" stroke-opacity="0.9"/><rect x="818" y="150" width="12" height="148" fill="url(#colg)"/><rect x="925" y="178" width="12" height="222" fill="url(#colg)"/><rect x="1043" y="150" width="12" height="87" fill="url(#colg)"/><rect x="1149" y="150" width="12" height="191" fill="url(#colg)"/><rect x="1031" y="282" width="12" height="223" fill="url(#colg)"/><rect x="1256" y="222" width="12" height="222" fill="url(#colg)"/><rect x="1449" y="150" width="12" height="109" fill="url(#colg)"/><rect x="1556" y="150" width="12" height="213" fill="url(#colg)"/><line x1="1037" y1="502.5" x2="1037" y2="424" stroke="#3062d0" stroke-width="2"/><line x1="1037" y1="502.5" x2="1117.5" y2="480.5" stroke="#e42020" stroke-width="2"/><line x1="1037" y1="502.5" x2="994" y2="460" stroke="#30c49c" stroke-width="2"/><path d="M1122 474l10 9M1132 474l-10 9" stroke="#666" stroke-width="1.4"/><path d="M983.5 450l5 6 5-6M988.5 456v6" stroke="#666" stroke-width="1.4" fill="none"/><path d="M1032 409h10l-10 11h10" stroke="#666" stroke-width="1.4" fill="none"/><g transform="translate(981 497) rotate(-14)"><text x="0" y="5" font-size="14" fill="#222" text-anchor="middle" font-family="Liberation Serif">±0.000</text></g><path d="M951 514l21-5.5-9.5 14z" fill="#fff" stroke="#333" stroke-width="1"/><path d="M1542.9 213.5L1571 207.6L1584 209.6L1595.8 221L1599 230.5L1600.5 261.3L1595 270.8L1569 280L1551.6 277L1535.8 263.7L1533 225Z" fill="#ebebeb"/><path d="M1542.9 213.5L1554 237.6L1595.8 229.7L1584 209.6L1571 207.6Z" fill="#eeeeee"/><path d="M1554 237.6L1556 277L1569 280L1595 270.8L1600.5 261.3L1599 230.5L1595.8 229.7Z" fill="#e8e8e8"/><path d="M1552 240l6-3 3 6z" fill="#dddddd"/><path d="M1593 231l4-4 2 5z" fill="#dedede"/><text x="1580" y="268" font-size="19" fill="#8a8a8a" text-anchor="middle" transform="skewY(-8) translate(0 222)" >前</text><g transform="translate(1544 251) rotate(62) skewX(-35)"><text x="0" y="5" font-size="14" fill="#8f8f8f" text-anchor="middle">左</text></g><text x="1572" y="226" font-size="13" fill="#8f8f8f" text-anchor="middle" transform="rotate(-22 1572 226) skewX(25) translate(-104 0)">上</text></g></svg>
<div class="a" style="left:1653px;top:155px;width:8px;height:821px;background:#e6e6e6"></div>
<div class="a" style="left:10px;top:155px;width:256px;height:813px;background:#f0f0f0;border:1px solid #9a9a9a;box-shadow:1px 1px 3px rgba(0,0,0,.35)"></div>
<div class="a" style="left:11px;top:156px;width:254px;height:37px;background:#e6e6e6"></div>
<div class="t" style="left:16px;top:163px;font-size:21px;color:#3a3a3a;letter-spacing:0.3px">桩基布置</div>
<svg style="left:249px;top:170px" width="8" height="8" viewBox="0 0 8 8" ><path d="M0.5 0.5l7 7M7.5 0.5l-7 7" stroke="#555" stroke-width="1.2"/></svg>
<div class="a" style="left:16px;top:193px;width:195px;height:70px;background:#fff"></div>
<svg style="left:44px;top:203px" width="9" height="50" viewBox="0 0 9 50" ><defs><linearGradient id="pg" x1="0" x2="1"><stop offset="0" stop-color="#2a2222"/><stop offset="0.5" stop-color="#4a3c3a"/><stop offset="1" stop-color="#9a8a86"/></linearGradient></defs><path d="M1 1h6v45l-3 3-3-3z" fill="url(#pg)"/></svg>
<div class="t" style="left:88px;top:213px;font-size:12px;color:#111">水下冲<span class="m">(</span>钻<span class="m">)</span>孔桩</div>
<div class="t" style="left:88px;top:231px;font-size:11px;color:#111">500；800,300</div>
<div class="a" style="left:212px;top:193px;width:50px;height:70px;background:#fff;border:1px solid #d5d5d5"></div>
<div class="t" style="left:226px;top:222px;font-size:12px;color:#333">增加</div>
<div class="a" style="left:16px;top:283px;width:246px;height:19px;background:#d4d4d4"></div>
<div class="t" style="left:20px;top:286px;font-size:13px;color:#111">截面列表</div>
<div class="a" style="left:19px;top:308px;width:120px;height:49px;border:1px solid #d8d8d8"></div>
<div class="a" style="left:29px;top:312px;width:79px;height:20px;background:#fafafa"></div>
<div class="a" style="left:31px;top:315px;width:13px;height:13px;border:1px solid #d9d9d9;background:#fbfbfb"></div>
<div class="t" style="left:47px;top:315px;font-size:12px;color:#c6c6c6">分色</div>
<div class="a" style="left:114px;top:317px;width:19px;height:15px;border:1px solid #d0d0d0;background:#f6f6f6"></div>
<div class="t" style="left:119px;top:318px;font-size:10px;color:#aaa">...</div>
<div class="a" style="left:31px;top:335px;width:13px;height:13px;border:1px solid #777;background:#fff"></div>
<div class="t" style="left:47px;top:335px;font-size:12px;color:#222">高亮</div>
<div class="a" style="left:149px;top:308px;width:100px;height:49px;border:1px solid #d8d8d8"></div>
<svg style="left:160px;top:315px" width="13" height="13" viewBox="0 0 13 13" ><circle cx="6.5" cy="6.5" r="5.5" fill="#fff" stroke="#1f8f95" stroke-width="1.2"/><circle cx="6.5" cy="6.5" r="3.2" fill="#1a9aa3"/></svg>
<div class="t" style="left:179px;top:315px;font-size:12px;color:#222">布置优先</div>
<svg style="left:160px;top:335px" width="13" height="13" viewBox="0 0 13 13" ><circle cx="6.5" cy="6.5" r="5.5" fill="#f4f4f4" stroke="#d2d2d2" stroke-width="1"/></svg>
<div class="t" style="left:179px;top:335px;font-size:12px;color:#222">大小优先</div>
<div class="a" style="left:17px;top:362px;width:40px;height:20px;background:#fff;border:1px solid #d0d0d0"></div>
<div class="t" style="left:25px;top:365px;font-size:12px;color:#222">增加</div>
<div class="a" style="left:60px;top:362px;width:40px;height:20px;background:#fff;border:1px solid #d0d0d0"></div>
<div class="t" style="left:68px;top:365px;font-size:12px;color:#222">删除</div>
<div class="a" style="left:103px;top:362px;width:40px;height:20px;background:#fff;border:1px solid #d0d0d0"></div>
<div class="t" style="left:111px;top:365px;font-size:12px;color:#222">修改</div>
<div class="a" style="left:17px;top:385px;width:40px;height:20px;background:#fff;border:1px solid #d0d0d0"></div>
<div class="t" style="left:25px;top:388px;font-size:12px;color:#222">清理</div>
<div class="a" style="left:60px;top:385px;width:40px;height:20px;background:#fff;border:1px solid #d0d0d0"></div>
<div class="t" style="left:68px;top:388px;font-size:12px;color:#222">复制</div>
<div class="a" style="left:103px;top:385px;width:40px;height:20px;background:#fff;border:1px solid #d0d0d0"></div>
<div class="t" style="left:111px;top:388px;font-size:12px;color:#222">去重</div>
<div class="a" style="left:146px;top:385px;width:40px;height:20px;background:#fff;border:1px solid #d0d0d0"></div>
<div class="t" style="left:154px;top:388px;font-size:12px;color:#222">合并</div>
<div class="a" style="left:17px;top:408px;width:246px;height:537px;background:#fff;border:1px solid #c8c8c8;border-bottom:none"></div>
<div class="a" style="left:18px;top:409px;width:244px;height:20px;background:#eeeeee;border-bottom:1px solid #c8c8c8"></div>
<div class="a" style="left:42px;top:409px;width:1px;height:20px;background:#cfcfcf"></div>
<div class="a" style="left:108px;top:409px;width:1px;height:20px;background:#cfcfcf"></div>
<div class="a" style="left:175px;top:409px;width:1px;height:20px;background:#cfcfcf"></div>
<div class="a" style="left:240px;top:409px;width:1px;height:20px;background:#cfcfcf"></div>
<div class="t" style="left:23px;top:413px;font-size:12px;color:#333">序.</div>
<div class="t" style="left:63px;top:413px;font-size:12px;color:#333">类型</div>
<div class="t" style="left:114px;top:413px;font-size:12px;color:#333">直径(...</div>
<div class="t" style="left:180px;top:413px;font-size:12px;color:#333">抗压,抗拔</div>
<div class="t" style="left:245px;top:413px;font-size:12px;color:#333">数.</div>
<div class="a" style="left:19px;top:449px;width:243px;height:20px;background:#3399ff"></div>
<div class="a" style="left:42px;top:449px;width:1px;height:20px;background:#fff"></div>
<div class="a" style="left:108px;top:449px;width:1px;height:20px;background:#fff"></div>
<div class="a" style="left:175px;top:449px;width:1px;height:20px;background:#fff"></div>
<div class="a" style="left:240px;top:449px;width:1px;height:20px;background:#fff"></div>
<div class="t" style="left:27px;top:433px;font-size:12px;color:#222">1</div>
<div class="t" style="left:47px;top:433px;font-size:12px;color:#222">预制方桩</div>
<div class="t" style="left:112px;top:433px;font-size:12px;color:#222">500</div>
<div class="t" style="left:179px;top:433px;font-size:12px;color:#222">800,300</div>
<div class="t" style="left:245px;top:433px;font-size:12px;color:#222">0</div>
<div class="t" style="left:27px;top:453px;font-size:12px;color:#0a0a0a">2</div>
<div class="t" style="left:47px;top:453px;font-size:12px;color:#0a0a0a">水下冲...</div>
<div class="t" style="left:112px;top:453px;font-size:12px;color:#0a0a0a">500</div>
<div class="t" style="left:179px;top:453px;font-size:12px;color:#0a0a0a">800,300</div>
<div class="t" style="left:245px;top:453px;font-size:12px;color:#0a0a0a">11</div>
<div class="a" style="left:15px;top:945px;width:247px;height:19px;background:#e6e6e6;border:1px solid #cfcfcf"></div>
<div class="a" style="left:15px;top:945px;width:17px;height:19px;background:#fff;border:1px solid #cfcfcf"></div>
<svg style="left:20px;top:950px" width="6" height="9" viewBox="0 0 6 9" ><path d="M6 0v9L0 4.5z" fill="#606060"/></svg>
<div class="a" style="left:33px;top:946px;width:166px;height:17px;background:#fff;border:1px solid #d6d6d6"></div>
<div class="a" style="left:245px;top:945px;width:17px;height:19px;background:#fff;border:1px solid #cfcfcf"></div>
<svg style="left:251px;top:950px" width="6" height="9" viewBox="0 0 6 9" ><path d="M0 0v9L6 4.5z" fill="#606060"/></svg>
<div class="a" style="left:266px;top:155px;width:223px;height:123px;background:#fdfdfd;border-right:1px solid #c9c9c9;border-bottom:1px solid #c9c9c9"></div>
<div class="t" style="left:280px;top:173px;font-size:12px;color:#333">轴转角<span class="m">(°&nbsp;)</span></div>
<div class="t" style="left:280px;top:209px;font-size:12px;color:#333">桩长<span class="m">(m)</span></div>
<div class="t" style="left:280px;top:245px;font-size:12px;color:#333">布置方式<span class="m">:</span></div>
<div class="a" style="left:384px;top:170px;width:95px;height:23px;background:#fff;border:1px solid #e3e3e3;border-bottom:1.5px solid #b5b5b5"></div>
<div class="t" style="left:387px;top:175px;font-size:12px;color:#111">0.0</div>
<div class="a" style="left:384px;top:206px;width:95px;height:23px;background:#fff;border:1px solid #e3e3e3;border-bottom:1.5px solid #b5b5b5"></div>
<div class="t" style="left:387px;top:211px;font-size:12px;color:#111">20.0</div>
<div class="a" style="left:383px;top:237px;width:32px;height:30px;background:#c7dcee;border:1px solid #b7c9d8"></div>
<svg style="left:391px;top:239px" width="20" height="27" viewBox="0 0 20 27" ><path d="M3 5l5-3 5 3v14l-5 3-5-3z" fill="#e8f2f4" stroke="#2f5f7a" stroke-width="1"/><path d="M8 8v13M3 5l5 3 5-3" fill="none" stroke="#9ab" stroke-width="0.8"/><path d="M16 11v7M14 15l2 3 2-3" stroke="#e04050" stroke-width="1.6" fill="none"/><path d="M3 24l10-4M3 20l10 4" stroke="#e58090" stroke-width="0.8"/></svg>
<div class="a" style="left:268px;top:448px;width:549px;height:354px;background:#efefef;border:1px solid #c3c3c3;box-shadow:1px 2px 4px rgba(0,0,0,.3)"></div>
<div class="a" style="left:269px;top:449px;width:547px;height:31px;background:#f7f7f7"></div>
<div class="t" style="left:280px;top:458px;font-size:12px;color:#222;font-weight:bold">桩基截面参数</div>
<svg style="left:797px;top:459px" width="9" height="9" viewBox="0 0 9 9" ><path d="M1 1l7 7M8 1l-7 7" stroke="#444" stroke-width="1.3"/></svg>
<div class="a" style="left:317px;top:515px;width:180px;height:215px;background:#fff;border:1px solid #8a8a8a"></div>
<svg style="left:317px;top:515px" width="180" height="215" viewBox="0 0 180 215" ><circle cx="90" cy="84.6" r="74.4" fill="none" stroke="#111" stroke-width="2"/><path d="M15 170.6h150M15 165.6v10M165 165.6v10" stroke="#222" stroke-width="1.3" fill="none"/></svg>
<div class="t" style="left:396px;top:696px;font-size:13px;color:#2525b5">500</div>
<div class="t" style="left:522px;top:513px;font-size:12px;color:#333">桩类型<span class="m">:</span></div>
<div class="t" style="left:522px;top:542px;font-size:12px;color:#333">抗压承载力<span class="m">[</span>特征值<span class="m">](kN):</span></div>
<div class="t" style="left:522px;top:572px;font-size:12px;color:#333">抗拔承载力<span class="m">[</span>特征值<span class="m">](kN):</span></div>
<div class="t" style="left:522px;top:601px;font-size:12px;color:#333">水平承载力<span class="m">[</span>特征值<span class="m">](kN):</span></div>
<div class="t" style="left:522px;top:630px;font-size:12px;color:#333">桩身承载力<span class="m">[</span>设计值<span class="m">](kN):</span></div>
<div class="t" style="left:522px;top:659px;font-size:12px;color:#333">桩直径<span class="m">(mm)</span></div>
<div class="a" style="left:649px;top:510px;width:109px;height:21px;background:#fff;border:1px solid #d6d6d6"></div>
<div class="t" style="left:652px;top:514px;font-size:12px;color:#222">水下冲(钻)孔桩</div>
<svg style="left:744px;top:518px" width="6" height="4" viewBox="0 0 6 4" ><path d="M0 0h6L3 3.5z" fill="#555"/></svg>
<div class="a" style="left:684px;top:539px;width:74px;height:20px;background:#fff;border:1px solid #d9d9d9"></div>
<div class="t" style="left:688px;top:543px;font-size:12px;color:#111">800</div>
<div class="a" style="left:684px;top:568px;width:74px;height:20px;background:#fff;border:1px solid #d9d9d9"></div>
<div class="t" style="left:688px;top:572px;font-size:12px;color:#111">300</div>
<div class="a" style="left:684px;top:598px;width:74px;height:20px;background:#fff;border:1px solid #d9d9d9"></div>
<div class="t" style="left:688px;top:602px;font-size:12px;color:#111">0</div>
<div class="a" style="left:684px;top:627px;width:74px;height:20px;background:#fff;border:1px solid #d9d9d9"></div>
<div class="t" style="left:688px;top:631px;font-size:12px;color:#111">10000</div>
<div class="a" style="left:684px;top:656px;width:74px;height:20px;background:#fff;border:1px solid #d9d9d9"></div>
<div class="t" style="left:688px;top:660px;font-size:12px;color:#111">500</div>
<div class="a" style="left:524px;top:742px;width:75px;height:23px;background:#fafafa;border:2px solid #338a7e"></div>
<div class="t" style="left:549px;top:747px;font-size:12px;color:#222">确定</div>
<div class="a" style="left:605px;top:742px;width:75px;height:23px;background:#fafafa;border:1px solid #bdbdbd"></div>
<div class="t" style="left:630px;top:747px;font-size:12px;color:#222">取消</div>
<div class="t" style="left:290px;top:945px;font-size:16px;color:#333">请点击确定桩基位置</div>
<div class="a" style="left:1653px;top:155px;width:275px;height:821px;background:#f3f3f3"></div>
<div class="t" style="left:1660px;top:163px;font-size:16px;color:#3a3a3a">视图浏览器</div>
<svg style="left:1894px;top:171px" width="9" height="5" viewBox="0 0 9 5" ><path d="M0 0h9L4.5 5z" fill="#555"/></svg>
<svg style="left:1913px;top:169px" width="9" height="9" viewBox="0 0 9 9" ><path d="M1 1l7 7M8 1l-7 7" stroke="#555" stroke-width="1.3"/></svg>
<div class="a" style="left:1660px;top:191px;width:268px;height:785px;background:#fcfcfc;border-top:1px solid #e2e2e2"></div>
<div class="a" style="left:1661px;top:360px;width:267px;height:24px;background:#dfeae9"></div>
<div class="t" style="left:1704px;top:198px;font-size:12px;color:#333;">项目信息</div>
<div class="t" style="left:1723px;top:222px;font-size:12px;color:#333;">模型空间</div>
<div class="t" style="left:1742px;top:246px;font-size:12px;color:#333;">全楼模型</div>
<div class="t" style="left:1742px;top:270px;font-size:12px;color:#333;">三维视图</div>
<div class="t" style="left:1761px;top:294px;font-size:12px;color:#333;">标高面</div>
<div class="t" style="left:1780px;top:318px;font-size:11px;color:#333;">12.000m</div>
<div class="t" style="left:1780px;top:342px;font-size:11px;color:#333;">6.000m</div>
<div class="t" style="left:1780px;top:366px;font-size:11px;color:#333;font-weight:bold;">0.000m</div>
<div class="t" style="left:1761px;top:390px;font-size:12px;color:#333;">轴立面</div>
<div class="t" style="left:1780px;top:414px;font-size:12px;color:#333;">1轴</div>
<div class="t" style="left:1780px;top:438px;font-size:12px;color:#333;">2轴</div>
<div class="t" style="left:1780px;top:462px;font-size:12px;color:#333;">3轴</div>
<div class="t" style="left:1780px;top:486px;font-size:12px;color:#333;">A轴</div>
<div class="t" style="left:1780px;top:510px;font-size:12px;color:#333;">B轴</div>
<div class="t" style="left:1780px;top:534px;font-size:12px;color:#333;">C轴</div>
<div class="t" style="left:1742px;top:558px;font-size:12px;color:#333;">模板视图</div>
<div class="t" style="left:1723px;top:582px;font-size:12px;color:#333;">分析模型</div>
<div class="t" style="left:1723px;top:606px;font-size:12px;color:#333;">视图映射</div>
<div class="t" style="left:1723px;top:630px;font-size:12px;color:#333;">图纸</div>
<div class="t" style="left:1723px;top:654px;font-size:12px;color:#333;">清单</div>
<svg style="left:0;top:0" width="1928" height="700" viewBox="0 0 1928 700"><rect x="1667.5" y="199.5" width="9" height="9" fill="#eef1f5" stroke="#8d97a6" stroke-width="0.9"/><path d="M1669.5 204h5" stroke="#333" stroke-width="1"/><path d="M1684 198h14v3.5h-14zM1684 202.5h14v3.5h-14zM1684 207h14v3.5h-14z" fill="#1f7a80"/><path d="M1693 199h4M1693 203.5h4M1693 208h4" stroke="#fff" stroke-width="1"/><rect x="1686.5" y="223.5" width="9" height="9" fill="#eef1f5" stroke="#8d97a6" stroke-width="0.9"/><path d="M1688.5 228h5" stroke="#333" stroke-width="1"/><path d="M1704 224l6-3 6 3v8l-6 3-6-3z M1704 224l6 3 6-3M1710 227v11" fill="none" stroke="#1f7a80" stroke-width="1.1"/><path d="M1722 249l7-3 7 3v9l-7 3-7-3z M1722 253l7 3 7-3M1729 250v13" fill="none" stroke="#1f7a80" stroke-width="1.1"/><rect x="1705.5" y="271.5" width="9" height="9" fill="#eef1f5" stroke="#8d97a6" stroke-width="0.9"/><path d="M1707.5 276h5" stroke="#333" stroke-width="1"/><path d="M1723 272l6-3 6 3v8l-6 3-6-3z M1723 272l6 3 6-3M1729 275v11" fill="none" stroke="#1f7a80" stroke-width="1.1"/><rect x="1724.5" y="295.5" width="9" height="9" fill="#eef1f5" stroke="#8d97a6" stroke-width="0.9"/><path d="M1726.5 300h5" stroke="#333" stroke-width="1"/><path d="M1740 304h8M1743 297h12M1745 297l2.5 4 2.5-4" stroke="#222" stroke-width="1" fill="none"/><path d="M1759 328h8M1762 321h12M1764 321l2.5 4 2.5-4" stroke="#222" stroke-width="1" fill="none"/><path d="M1759 352h8M1762 345h12M1764 345l2.5 4 2.5-4" stroke="#222" stroke-width="1" fill="none"/><path d="M1759 376h8M1762 369h12M1764 369l2.5 4 2.5-4" stroke="#222" stroke-width="1" fill="none"/><rect x="1724.5" y="391.5" width="9" height="9" fill="#eef1f5" stroke="#8d97a6" stroke-width="0.9"/><path d="M1726.5 396h5" stroke="#333" stroke-width="1"/><path d="M1742 395l5-5 7 2v8l-5 3-7-3z" fill="#e8eef0" stroke="#1f7a80" stroke-width="1"/><path d="M1741 396l6-6 7 2-6 6z" fill="#1f7a80"/><path d="M1761 419l5-5 7 2v8l-5 3-7-3z" fill="#e8eef0" stroke="#1f7a80" stroke-width="1"/><path d="M1760 420l6-6 7 2-6 6z" fill="#1f7a80"/><path d="M1761 443l5-5 7 2v8l-5 3-7-3z" fill="#e8eef0" stroke="#1f7a80" stroke-width="1"/><path d="M1760 444l6-6 7 2-6 6z" fill="#1f7a80"/><path d="M1761 467l5-5 7 2v8l-5 3-7-3z" fill="#e8eef0" stroke="#1f7a80" stroke-width="1"/><path d="M1760 468l6-6 7 2-6 6z" fill="#1f7a80"/><path d="M1761 491l5-5 7 2v8l-5 3-7-3z" fill="#e8eef0" stroke="#1f7a80" stroke-width="1"/><path d="M1760 492l6-6 7 2-6 6z" fill="#1f7a80"/><path d="M1761 515l5-5 7 2v8l-5 3-7-3z" fill="#e8eef0" stroke="#1f7a80" stroke-width="1"/><path d="M1760 516l6-6 7 2-6 6z" fill="#1f7a80"/><path d="M1761 539l5-5 7 2v8l-5 3-7-3z" fill="#e8eef0" stroke="#1f7a80" stroke-width="1"/><path d="M1760 540l6-6 7 2-6 6z" fill="#1f7a80"/><rect x="1705.5" y="559.5" width="9" height="9" fill="#eef1f5" stroke="#8d97a6" stroke-width="0.9"/><path d="M1707.5 564h5" stroke="#333" stroke-width="1"/><path d="M1710 561.5v5" stroke="#333" stroke-width="1"/><path d="M1722 558h13v4h-13zM1722 564h6v6h-6zM1730 564h6v6h-6z" fill="none" stroke="#1f7a80" stroke-width="1.3"/><path d="M1703 587l4-4h11v7l-4 4h-11z M1703 587h11v7M1714 587l4-4M1706 587v7M1710 587v7M1703 590.5h11" fill="none" stroke="#1f7a80" stroke-width="1.1"/><rect x="1686.5" y="607.5" width="9" height="9" fill="#eef1f5" stroke="#8d97a6" stroke-width="0.9"/><path d="M1688.5 612h5" stroke="#333" stroke-width="1"/><path d="M1691 609.5v5" stroke="#333" stroke-width="1"/><path d="M1703 606h5l2 2h7v11h-14z M1703 610h14" fill="none" stroke="#1f7a80" stroke-width="1.2"/><rect x="1686.5" y="631.5" width="9" height="9" fill="#eef1f5" stroke="#8d97a6" stroke-width="0.9"/><path d="M1688.5 636h5" stroke="#333" stroke-width="1"/><path d="M1691 633.5v5" stroke="#333" stroke-width="1"/><path d="M1704 630h12v13h-12z M1707 630v13" fill="none" stroke="#1f7a80" stroke-width="1.2"/><path d="M1705 653h7l4 4v10h-11z M1708 660h5M1708 663h5" fill="none" stroke="#1f7a80" stroke-width="1.1"/></svg>
<div class="a" style="left:1653px;top:975px;width:275px;height:29px;background:#ececec"></div>
<div class="a" style="left:1656px;top:980px;width:72px;height:23px;background:#fff"></div>
<div class="t" style="left:1662px;top:985px;font-size:12px;color:#222">视图浏览器</div>
<div class="t" style="left:1735px;top:985px;font-size:12px;color:#666">工作树</div>
<div class="a" style="left:8px;top:972px;width:1646px;height:32px;background:#f1f1f1;border-top:1px solid #dcdcdc"></div>
<div class="a" style="left:8px;top:973px;width:280px;height:30px;background:#fbfbfb"></div>
<div class="a" style="left:288px;top:973px;width:607px;height:30px;background:#fbfbfb"></div>
<div class="a" style="left:895px;top:973px;width:580px;height:30px;background:#fbfbfb"></div>
<div class="a" style="left:1475px;top:973px;width:154px;height:30px;background:#fbfbfb"></div>
<div class="a" style="left:8px;top:1003px;width:1920px;height:29px;background:#efefef;border-top:1px solid #d6d6d6"></div>
<div class="t" style="left:297px;top:981px;font-size:12px;color:#7a7a7a">在此输入命令</div>
<div class="t" style="left:954px;top:1010px;font-size:12.5px;color:#333">-1768.72 , 19076.40 , 0.00</div>
<svg style="left:0;top:0" width="1928" height="1040" viewBox="0 0 1928 1040"><rect x="12" y="981" width="2" height="2" fill="#888"/><rect x="12" y="985" width="2" height="2" fill="#888"/><rect x="12" y="989" width="2" height="2" fill="#888"/><rect x="12" y="993" width="2" height="2" fill="#888"/><rect x="23.5" y="981.5" width="9" height="8" fill="none" stroke="#6fb7c4" stroke-width="0.8" stroke-dasharray="1.5 1"/><path d="M25 983.5l3-1.5 3 1.5v3.5l-3 1.5-3-1.5z" fill="#2a6f86"/><circle cx="36" cy="985" r="2.6" fill="#eef3f4" stroke="#9bb" stroke-width="0.8"/><path d="M30 992c2.5-3.5 7.5-3.5 10 0c-2.5 3.5-7.5 3.5-10 0z" fill="none" stroke="#1d5b68" stroke-width="0.9"/><circle cx="35" cy="992" r="1.2" fill="#1d5b68"/><path d="M31 989l8 6" stroke="#1d5b68" stroke-width="0.9"/><rect x="49.5" y="981.5" width="9" height="8" fill="none" stroke="#8fc7d0" stroke-width="0.8" stroke-dasharray="1.5 1"/><path d="M51 983.5l3-1.5 3 1.5v3.5l-3 1.5-3-1.5z" fill="#a9cfd6"/><path d="M60 983l2.5-1.5 2.5 1.5v3l-2.5 1.5-2.5-1.5z" fill="#eef3f4" stroke="#1d5b68" stroke-width="0.8"/><path d="M57 992c2.5-3.5 7.5-3.5 10 0c-2.5 3.5-7.5 3.5-10 0z" fill="none" stroke="#1d5b68" stroke-width="0.9"/><circle cx="62" cy="992" r="1.2" fill="#1d5b68"/><path d="M58 989l8 6" stroke="#1d5b68" stroke-width="0.9"/><path d="M77 983.5l3-1.5 3 1.5v3.5l-3 1.5-3-1.5z" fill="#2a6f86"/><circle cx="87.5" cy="985" r="2.4" fill="#fff" stroke="#1d5b68" stroke-width="0.8"/><path d="M82 992c2.5-3.5 7.5-3.5 10 0c-2.5 3.5-7.5 3.5-10 0z" fill="none" stroke="#1d5b68" stroke-width="0.9"/><circle cx="87" cy="992" r="1.2" fill="#1d5b68"/><path d="M104 984l5-3 5 2v7l-5 3-5-2z" fill="#d7e2e6" stroke="#6a8a94" stroke-width="0.9"/><path d="M110 988l5 5M115 988l-5 5" stroke="#e04848" stroke-width="1.1"/><rect x="122.5" y="976.5" width="23" height="23" fill="#cce4e0" stroke="#4fa89c" stroke-width="1"/><path d="M127 981h13v12h-13z" fill="#fff" stroke="#1d5b68" stroke-width="1"/><path d="M129 983h11v10h-11z" fill="none" stroke="#6aa" stroke-width="0.8"/><path d="M133 985h7v6h-7z" fill="#e8f4f5" stroke="#1d5b68" stroke-width="0.8"/><rect x="148.5" y="976.5" width="23" height="23" fill="#cce4e0" stroke="#4fa89c" stroke-width="1"/><path d="M152 983h13M152 987h13M152 991h7M155 980v14M159 980v14M163 980v5" stroke="#2a7a86" stroke-width="0.9"/><path d="M158 992c2.5-3.5 7.5-3.5 10 0c-2.5 3.5-7.5 3.5-10 0z" fill="none" stroke="#1d5b68" stroke-width="0.9"/><circle cx="163" cy="992" r="1.2" fill="#1d5b68"/><rect x="174.5" y="976.5" width="23" height="23" fill="#cce4e0" stroke="#4fa89c" stroke-width="1"/><path d="M179 981v13M193 981v7M177 983h18M177 993h8" stroke="#2a7a86" stroke-width="0.9"/><path d="M184 992c2.5-3.5 7.5-3.5 10 0c-2.5 3.5-7.5 3.5-10 0z" fill="none" stroke="#1d5b68" stroke-width="0.9"/><circle cx="189" cy="992" r="1.2" fill="#1d5b68"/><rect x="201.5" y="976.5" width="23" height="23" fill="#cce4e0" stroke="#4fa89c" stroke-width="1"/><rect x="208.5" y="984.5" width="9" height="9" fill="#fff" stroke="#1d5b68" stroke-width="1.1"/><path d="M203 983h6M206 980v6" stroke="#2aa0b0" stroke-width="1"/><path d="M232 992l10-11 4 3.5-10 11z" fill="#e3f4f6" stroke="#1d5b68" stroke-width="1"/><path d="M235 990l1.5 1.3M237.5 987.5l1.5 1.3M240 985l1.5 1.3" stroke="#1d5b68" stroke-width="0.8"/><path d="M257 992a8 7.5 0 0 1 16 0z" fill="#fff" stroke="#1d5b68" stroke-width="1.2"/><path d="M265 981v2M259 992v-1.5M271 992v-1.5" stroke="#1d5b68" stroke-width="0.9"/><rect x="284" y="981" width="2" height="2" fill="#888"/><rect x="284" y="985" width="2" height="2" fill="#888"/><rect x="284" y="989" width="2" height="2" fill="#888"/><rect x="284" y="993" width="2" height="2" fill="#888"/><rect x="894" y="978" width="1" height="20" fill="#d0d0d0"/><path d="M906 990l4-4 4 4" stroke="#333" stroke-width="1.2" fill="none"/><rect x="930" y="981" width="2" height="2" fill="#888"/><rect x="930" y="985" width="2" height="2" fill="#888"/><rect x="930" y="989" width="2" height="2" fill="#888"/><rect x="930" y="993" width="2" height="2" fill="#888"/><path d="M941 984l3-3h10v10l-3 3h-10z" fill="#fff" stroke="#1d5b68" stroke-width="1"/><path d="M941 984h10v10M951 984l3-3" fill="none" stroke="#1d5b68" stroke-width="1"/><path d="M944 981v10h10M941 994l3-3" fill="none" stroke="#1d5b68" stroke-width="0.7"/><path d="M968 984l3-3h10v10l-3 3h-10z" fill="#a6dede" stroke="#3a9aa5" stroke-width="1"/><path d="M968 984h10v10M978 984l3-3" fill="none" stroke="#3a9aa5" stroke-width="1"/><path d="M994 984l3-3h10v10l-3 3h-10z" fill="#fff" stroke="#7ab8c0" stroke-width="1"/><path d="M994 984h10v10M1004 984l3-3" fill="none" stroke="#7ab8c0" stroke-width="1"/><path d="M997 981v10h10M994 994l3-3" fill="none" stroke="#7ab8c0" stroke-width="0.7"/><path d="M1021 986l6-6 7 2v9l-6 3-7-3z" fill="#e8eef0" stroke="#6a8a94" stroke-width="0.8"/><path d="M1020 987l7-7 7 2-7 7z" fill="#2f6f90"/><path d="M1047 981h12M1047 987h12M1047 993h12M1047 981v12M1053 981v12M1059 981v12" stroke="#1d5b68" stroke-width="0.8"/><circle cx="1047" cy="981" r="1.3" fill="#fff" stroke="#1d5b68" stroke-width="0.7"/><circle cx="1053" cy="981" r="1.3" fill="#fff" stroke="#1d5b68" stroke-width="0.7"/><circle cx="1059" cy="981" r="1.3" fill="#fff" stroke="#1d5b68" stroke-width="0.7"/><circle cx="1047" cy="987" r="1.3" fill="#fff" stroke="#1d5b68" stroke-width="0.7"/><circle cx="1059" cy="987" r="1.3" fill="#fff" stroke="#1d5b68" stroke-width="0.7"/><circle cx="1047" cy="993" r="1.3" fill="#fff" stroke="#1d5b68" stroke-width="0.7"/><circle cx="1053" cy="993" r="1.3" fill="#fff" stroke="#1d5b68" stroke-width="0.7"/><circle cx="1059" cy="993" r="1.3" fill="#fff" stroke="#1d5b68" stroke-width="0.7"/><rect x="1070" y="978" width="1" height="20" fill="#d0d0d0"/><text x="1080" y="995" font-size="15" fill="#1d4a6a" font-family="Liberation Sans">A</text><path d="M1091 979v5M1088.5 981.5h5" stroke="#3bb4bf" stroke-width="1.2"/><text x="1106" y="995" font-size="15" fill="#1d4a6a" font-family="Liberation Sans">A</text><path d="M1115 981.5h5" stroke="#1d4a6a" stroke-width="1.2"/><path d="M1131 985l9-4 6 2v6l-9 4-6-2z" fill="#dfeef2" stroke="#1d5b68" stroke-width="0.9"/><path d="M1131 985l6 2 9-4M1137 987v6" fill="none" stroke="#1d5b68" stroke-width="0.8"/><circle cx="1143" cy="991" r="2.2" fill="#fff" stroke="#3aa0b0" stroke-width="0.8"/><path d="M1144.5 992.5l2 2" stroke="#3aa0b0" stroke-width="0.9"/><path d="M1162 982c0-2 4-2 4 0v10c0 1.5-4 1.5-4 0z" fill="#eef5f6" stroke="#1d5b68" stroke-width="0.9"/><circle cx="1169" cy="991" r="2.2" fill="#fff" stroke="#3aa0b0" stroke-width="0.8"/><path d="M1170.5 992.5l2 2" stroke="#3aa0b0" stroke-width="0.9"/><path d="M1185 992l8-9 3 2-8 9z" fill="#dff0f2" stroke="#2a8a98" stroke-width="0.9"/><circle cx="1195" cy="991" r="2.2" fill="#fff" stroke="#3aa0b0" stroke-width="0.8"/><path d="M1196.5 992.5l2 2" stroke="#3aa0b0" stroke-width="0.9"/><path d="M1209 987l7-4 8 3-1 3-7 4z" fill="#fff" stroke="#2a8a98" stroke-width="0.9"/><circle cx="1221" cy="991" r="2.2" fill="#fff" stroke="#3aa0b0" stroke-width="0.8"/><path d="M1222.5 992.5l2 2" stroke="#3aa0b0" stroke-width="0.9"/><path d="M1243 980v14M1238 985h10M1238 989h10" stroke="#c03030" stroke-width="0.9"/><path d="M1243 980v14" stroke="#1d5b68" stroke-width="0.9"/><rect x="1260" y="978" width="1" height="20" fill="#d0d0d0"/><path d="M1269 986l8-4 8 3v2l-8 4-8-3z" fill="#e8f1f3" stroke="#1d5b68" stroke-width="1.1"/><path d="M1295 986l8-4 8 3v2l-8 4-8-3z" fill="#e8f1f3" stroke="#1d5b68" stroke-width="1.1"/><path d="M1300 986l3-2 3 1-3 2z" fill="#1d5b68"/><rect x="1317.5" y="976.5" width="23" height="23" fill="#cce4e0" stroke="#4fa89c" stroke-width="1"/><rect x="1343.5" y="976.5" width="23" height="23" fill="#cce4e0" stroke="#4fa89c" stroke-width="1"/><rect x="1369.5" y="976.5" width="23" height="23" fill="#cce4e0" stroke="#4fa89c" stroke-width="1"/><rect x="1395.5" y="976.5" width="23" height="23" fill="#cce4e0" stroke="#4fa89c" stroke-width="1"/><rect x="1421.5" y="976.5" width="23" height="23" fill="#cce4e0" stroke="#4fa89c" stroke-width="1"/><path d="M1321 983l8-3 7 2v2l-3 1v4l3 1v2l-8 3-7-2v-2l3-1v-4l-3-1z" fill="#e3f0f2" stroke="#1d5b68" stroke-width="1"/><path d="M1351 982l4-2 4 2v11l-4 2-4-2z" fill="#e8f3f5" stroke="#1d5b68" stroke-width="1"/><path d="M1375 993l9-10c1-1 3 0 2 1l-9 10c-1 1-3 0-2-1z" fill="#e6f3f5" stroke="#7ab8c0" stroke-width="0.9"/><path d="M1401 980v14M1403 980v14" stroke="#6ab8c0" stroke-width="0.9"/><path d="M1404 984h9l-9 6z" fill="#6cc0c8"/><rect x="1425" y="981" width="16" height="14" fill="#fff"/><path d="M1426 984l8-3c3-1 6 2 5 5l-2 5c-1 3-4 3-6 2l-6-4z" fill="#e3f0f2" stroke="#1d5b68" stroke-width="1"/><path d="M1452 981l7 3 7-3M1454 983v10M1464 983v10M1455 987h8" stroke="#1d5b68" stroke-width="1.1" fill="none"/><rect x="1478" y="981" width="2" height="2" fill="#888"/><rect x="1478" y="985" width="2" height="2" fill="#888"/><rect x="1478" y="989" width="2" height="2" fill="#888"/><rect x="1478" y="993" width="2" height="2" fill="#888"/><rect x="1486.5" y="976.5" width="85" height="23" fill="#fff" stroke="#cfcfcf"/><path d="M1560 987h6l-3 3z" fill="#555"/><path d="M1581 983l4-3h8v9l-4 3h-8z" fill="#a8dbe0" stroke="#3a9aa5" stroke-width="1"/><path d="M1606 982h12l-3 5h-12zM1612 990a3 3 0 1 0 0.1 0" fill="none" stroke="#1d5b68" stroke-width="1"/><path d="M16.5 1011.5h5l1.5 2h8v11h-14.5z" fill="#e3f3f5" stroke="#1d5b68" stroke-width="1.2"/><path d="M25 1012.5h5" stroke="#3aa0b0" stroke-width="1"/><path d="M42 1013v-2h3M42 1023v2h3M56 1013v-2h-3M56 1023v2h-3M45.5 1013.5h3v9h-3zM50 1013.5h3v9h-3z" fill="none" stroke="#1d5b68" stroke-width="1.1"/><path d="M68.5 1011.5h15v12h-15zM68.5 1014.5h15" fill="none" stroke="#1d5b68" stroke-width="1.1"/><path d="M79 1018v7M75.5 1021.5h7" stroke="#3aa0b0" stroke-width="1.1"/><rect x="92" y="1008" width="1" height="20" fill="#d0d0d0"/><path d="M101 1014v-3h3M101 1022v3h3M115 1014v-3h-3M115 1022v3h-3" fill="none" stroke="#1d5b68" stroke-width="1.2"/><path d="M103.5 1018h9M108 1013.5v9" stroke="#1d5b68" stroke-width="2"/><path d="M131 1024c-3-2-4-5-4-7l2-1 2 2v-8c0-1.5 2-1.5 2 0v6-8c0-1.5 2-1.5 2 0v8-7c0-1.5 2-1.5 2 0v7-5c0-1.5 2-1.5 2 0v8c0 3-2 5-4 5z" fill="#fff" stroke="#1d5b68" stroke-width="1"/><path d="M153 1018c0-5 5-9 7-7s-4 3-7 7zM167 1018c0 5-5 9-7 7s4-3 7-7zM160 1011c5 0 9 5 7 7s-3-4-7-7zM160 1025c-5 0-9-5-7-7s3 4 7 7z" fill="none" stroke="#1d5b68" stroke-width="1"/><circle cx="185.5" cy="1016.5" r="5.5" fill="none" stroke="#1d5b68" stroke-width="1.1"/><path d="M189.5 1020.5l4.5 4.5" stroke="#1d5b68" stroke-width="1.3"/><circle cx="185.5" cy="1016.5" r="2.5" fill="none" stroke="#3aa0b0" stroke-width="0.8" stroke-dasharray="1 1"/><rect x="204" y="1008" width="1" height="20" fill="#d0d0d0"/><path d="M212.5 1014.5l6.5-3.5 6.5 3.5v8l-6.5 3.5-6.5-3.5z" fill="none" stroke="#1d5b68" stroke-width="1.1"/><path d="M212.5 1014.5l6.5 3.5 6.5-3.5M219 1018v8" fill="none" stroke="#1d5b68" stroke-width="1.1"/><path d="M238.5 1014.5l6.5-3.5 6.5 3.5v8l-6.5 3.5-6.5-3.5z" fill="none" stroke="#1d5b68" stroke-width="1.1"/><path d="M238.5 1014.5l6.5 3.5 6.5-3.5M245 1018v8" fill="none" stroke="#1d5b68" stroke-width="1.1"/><path d="M238.5 1022.5l6.5-3.5 6.5 3.5M245 1011v8" fill="none" stroke="#1d5b68" stroke-width="0.8"/><path d="M264.5 1014.5l6.5-3.5 6.5 3.5v8l-6.5 3.5-6.5-3.5z" fill="none" stroke="#1d5b68" stroke-width="1.1"/><path d="M264.5 1014.5l6.5 3.5 6.5-3.5M271 1018v8" fill="none" stroke="#1d5b68" stroke-width="1.1"/><path d="M264.5 1014.5l6.5 3.5v8l-6.5-3.5z" fill="#a9cdd6"/><rect x="287.0" y="1007.0" width="22" height="22" fill="#cce4e0" stroke="#4fa89c" stroke-width="1"/><path d="M291.5 1014.5l6.5-3.5 6.5 3.5v8l-6.5 3.5-6.5-3.5z" fill="#d9ecef" stroke="#1d5b68" stroke-width="1.1"/><path d="M291.5 1014.5l6.5 3.5 6.5-3.5M298 1018v8" fill="none" stroke="#1d5b68" stroke-width="1.1"/><path d="M291.5 1014.5l6.5 3.5v8l-6.5-3.5z" fill="#a9cdd6"/><path d="M317 1016l6-3 6 3v6l-6 3-6-3z" fill="#e6eef0"/><rect x="340" y="1008" width="1" height="20" fill="#d0d0d0"/><path d="M349 1014l10-3 5 3v6l-10 3-5-3z" fill="#e9f4f5" stroke="#1d5b68" stroke-width="1.1"/><rect x="372.0" y="1007.0" width="22" height="22" fill="#cce4e0" stroke="#4fa89c" stroke-width="1"/><path d="M374 1012h7M374 1016h7M374 1020h7M374 1024h18M385 1011l-6 14" stroke="#1d5b68" stroke-width="1.1"/><path d="M404 1016l4-4 4 4M404 1021l4-4 4 4" stroke="#1d5b68" stroke-width="1.2" fill="none"/><rect x="425" y="1008" width="1" height="20" fill="#d0d0d0"/><path d="M439 1018h6M455 1018h60M527 1018h7M530.5 1014.5v7" stroke="#aaa" stroke-width="1"/><rect x="483" y="1012" width="4" height="12" fill="#f4f4f4" stroke="#aaa"/><path d="M1710 1014h14l-4 6h-10z" fill="none" stroke="#1d5b68" stroke-width="1.2"/><circle cx="1720" cy="1022" r="2.5" fill="none" stroke="#2aa" stroke-width="1.3"/><rect x="1734.0" y="1008.0" width="20" height="20" fill="#cce4e0" stroke="#4fa89c" stroke-width="1"/><path d="M1738 1013h13v13h-13z" fill="none" stroke="#1d5b68" stroke-width="1.3"/><rect x="1736" y="1010" width="5" height="5" fill="#fff" stroke="#1d5b68"/><path d="M1756 1020l3-3 3 3" stroke="#333" fill="none"/><rect x="1770.0" y="1008.0" width="20" height="20" fill="#cce4e0" stroke="#4fa89c" stroke-width="1"/><path d="M1772 1026h16M1773 1025l12-12" stroke="#1d5b68" stroke-width="1.2"/><circle cx="1779" cy="1019" r="2" fill="none" stroke="#1d5b68"/><rect x="1796.0" y="1008.0" width="20" height="20" fill="#cce4e0" stroke="#4fa89c" stroke-width="1"/><path d="M1799 1010v16h15M1800 1012c3 8 6 12 10 12" stroke="#1d5b68" stroke-width="1.2" fill="none"/><path d="M1826 1010v16h14M1826 1021h5v5" stroke="#1d5b68" stroke-width="1.3" fill="none"/><path d="M1850 1010h16v16h-16zM1854 1010v16M1858 1010v16M1862 1010v16M1850 1014h16M1850 1018h16M1850 1022h16" stroke="#1d5b68" stroke-width="1.1" fill="none"/><path d="M1880 1026v-14M1877 1015l3-4 3 4M1880 1025h9M1886 1022l3 3-3 3" stroke="#2a8a98" stroke-width="1.4" fill="none"/><rect x="1887" y="1012" width="6" height="5" fill="none" stroke="#1d5b68"/><circle cx="1909" cy="1018" r="5" fill="none" stroke="#1d6e80" stroke-width="3" stroke-dasharray="2.5 1.5"/><circle cx="1909" cy="1018" r="2.5" fill="none" stroke="#1d6e80" stroke-width="1.3"/></svg>
<svg style="left:0;top:0" width="1928" height="1267" viewBox="0 0 1928 1267"><path d="M486 225.5h34q6 0 6 6v14q0 6 6 6h40" fill="none" stroke="#8b0a1e" stroke-width="4.2"/><path d="M585 251.5l-17-13.5 4 13.5-4 13.5z" fill="#8b0a1e"/><path d="M542 806v215q0 6 6 6h62q6 0 6 6v137" fill="none" stroke="#8b0a1e" stroke-width="4.2"/><path d="M616 1181l-13.5-17 13.5 4 13.5-4z" fill="#8b0a1e"/><path d="M138 966v200" fill="none" stroke="#8b0a1e" stroke-width="4.2"/><path d="M138 1181l-13.5-17 13.5 4 13.5-4z" fill="#8b0a1e"/></svg>
<div class="a" style="left:585px;top:209px;width:242px;height:86px;background:#f8cc8e"></div>
<div class="a" style="left:585px;top:207px;width:242px;height:86px;display:flex;align-items:center;justify-content:center;font-size:30px;font-weight:bold;color:#1010a8;-webkit-text-stroke:0.4px #1010a8;white-space:nowrap">布置参数</div>
<div class="a" style="left:17px;top:1181px;width:242px;height:86px;background:#f8cc8e"></div>
<div class="a" style="left:17px;top:1179px;width:242px;height:86px;display:flex;align-items:center;justify-content:center;font-size:30px;font-weight:bold;color:#1010a8;-webkit-text-stroke:0.4px #1010a8;white-space:nowrap">截面列表</div>
<div class="a" style="left:495px;top:1181px;width:242px;height:86px;background:#f8cc8e"></div>
<div class="a" style="left:495px;top:1179px;width:242px;height:86px;display:flex;align-items:center;justify-content:center;font-size:30px;font-weight:bold;color:#1010a8;-webkit-text-stroke:0.4px #1010a8;white-space:nowrap">定义面板</div>
</body></html>
